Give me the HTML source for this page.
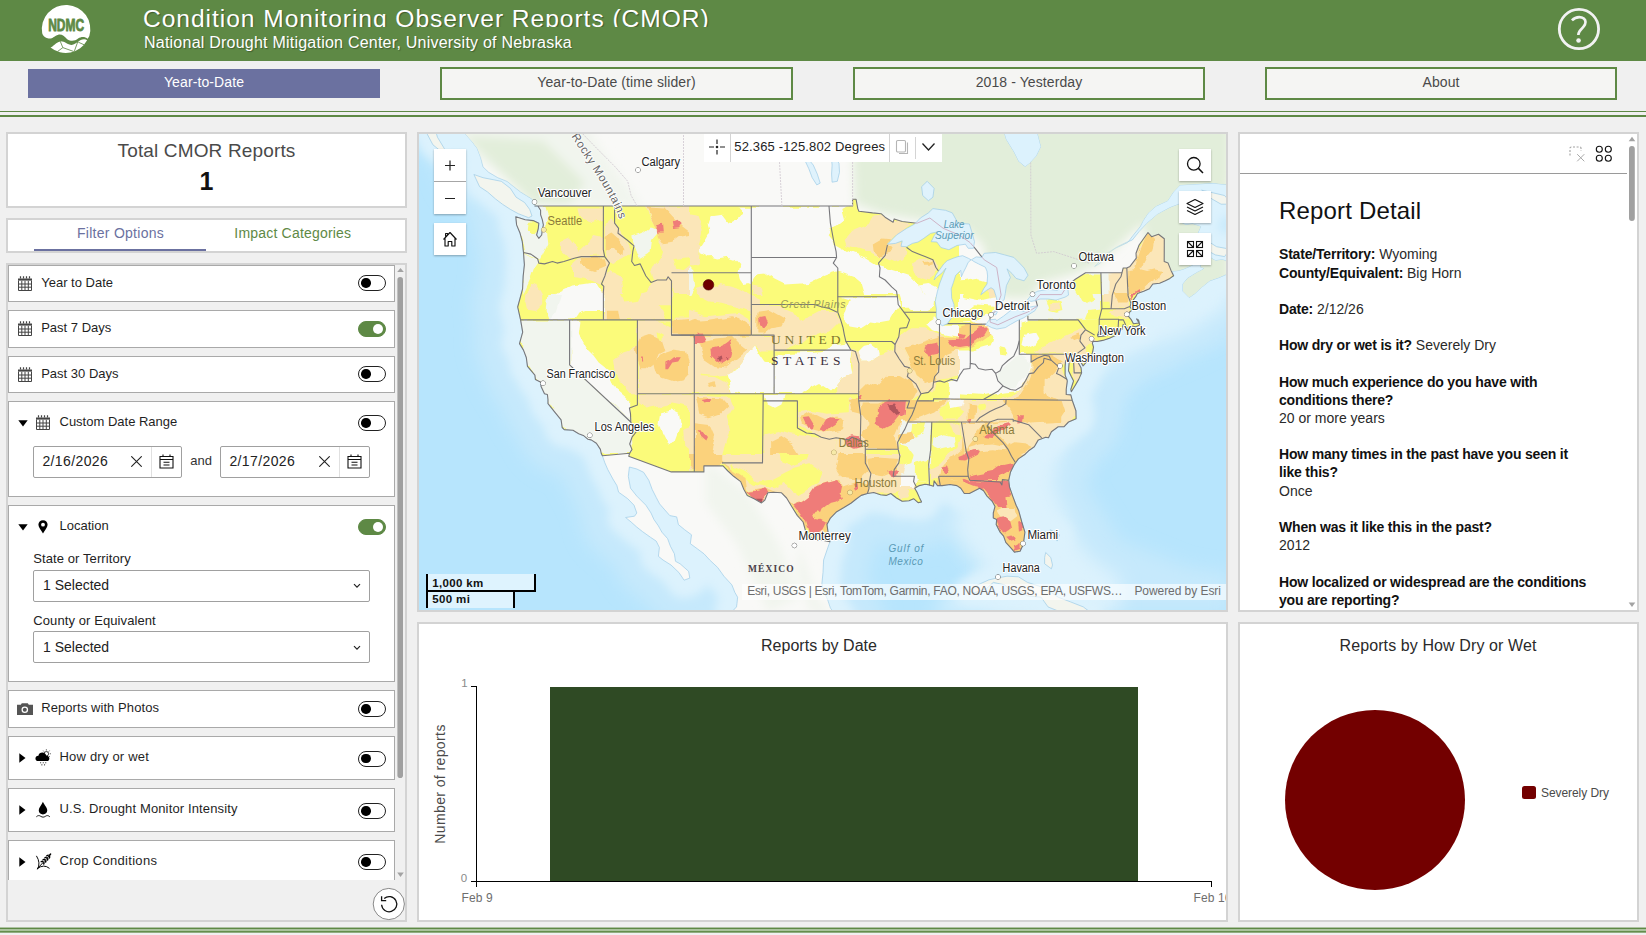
<!DOCTYPE html>
<html><head><meta charset="utf-8"><title>CMOR</title>
<style>
*{box-sizing:border-box;margin:0;padding:0}
html,body{width:1646px;height:935px;overflow:hidden;background:#f0f0f0;font-family:"Liberation Sans",sans-serif;color:#1a1a1a}
.abs{position:absolute}
.t{position:absolute;white-space:nowrap;line-height:1}
#hdr{position:absolute;left:0;top:0;width:1646px;height:61px;background:#5e8945}
.nav{position:absolute;height:33px;top:67px;border:2px solid #5e8945;background:#f5f5f3}
.panel{position:absolute;background:#fff;border:2px solid #d3d3d3}
.card{position:absolute;left:8px;width:387px;background:#fff;border:1px solid #a9a9a9}
.tog{position:absolute;left:358px;width:28px;height:16px;border-radius:8px;border:1px solid #222;background:#fff}
.tog i{position:absolute;left:2px;top:2.3px;width:9.5px;height:9.5px;border-radius:50%;background:#000}
.tog.on{background:#5e8945;border-color:#5e8945}
.tog.on i{left:auto;right:2px;top:2px;width:10px;height:10px;background:#fff}
.lbl{position:absolute;white-space:nowrap;font-size:13px;line-height:1;color:#1f1f1f}
.inp{position:absolute;height:32px;border:1px solid #a0a0a0;background:#fff;border-radius:2px}
.mbtn{position:absolute;width:32px;height:32px;background:#fff;box-shadow:0 1px 2px rgba(0,0,0,.3)}
</style></head><body>

<div id="hdr">
 <svg class="abs" style="left:30px;top:0px" width="80" height="60" viewBox="0 0 1247 935">
  <path d="M190 520 A378 378 0 1 1 925 560 L900 605 C860 570 800 565 750 600 C700 640 640 650 580 610 C530 560 500 530 440 540 C380 555 350 610 290 600 C230 590 200 560 190 520 Z" fill="#fff"/>
  <path d="M320 740 C370 720 400 660 470 645 C540 640 580 700 650 700 C700 695 740 650 790 625 C830 605 870 610 890 628 A378 378 0 0 1 320 740 Z" fill="#fff"/>
  <path d="M470 640 L512 742 L430 802 M512 742 L680 802 M745 650 L690 802 M752 657 L842 697" stroke="#5e8945" stroke-width="13" fill="none"/>
  <text x="283" y="480" font-family="Liberation Sans" font-weight="700" font-size="266" fill="#5e8945" stroke="#5e8945" stroke-width="13" textLength="560" lengthAdjust="spacingAndGlyphs">NDMC</text>
 </svg>
 <div class="abs" style="left:0;top:0;width:1400px;height:27px;overflow:hidden">
  <div class="t" style="left:143px;top:6.6px;font-size:24.6px;color:#fff;letter-spacing:.95px;text-shadow:1px 1px 1px rgba(0,0,0,.35)">Condition Monitoring Observer Reports (CMOR)</div>
 </div>
 <div class="t" style="left:144px;top:35.2px;font-size:16px;color:#fff;letter-spacing:.23px;text-shadow:1px 1px 1px rgba(0,0,0,.3)">National Drought Mitigation Center, University of Nebraska</div>
 <svg class="abs" style="left:1540px;top:0px" width="80" height="60" viewBox="0 0 1247 935">
  <circle cx="607" cy="452" r="306" fill="none" stroke="#f2f2f2" stroke-width="44"/>
  <path d="M498 318 C540 275 600 262 650 272 C700 285 725 330 700 385 C680 425 640 450 615 490 C603 510 598 525 598 545" fill="none" stroke="#f2f2f2" stroke-width="42"/>
  <circle cx="601" cy="632" r="36" fill="#f2f2f2"/>
 </svg>
</div>
<div class="abs" style="left:28px;top:69px;width:352px;height:29px;background:#6b71a0"></div>
<div class="t" style="left:28px;top:74.75px;font-size:14px;color:#fff;letter-spacing:0.1px;width:352px;text-align:center;">Year-to-Date</div>

<div class="nav" style="left:440px;width:353px"></div>
<div class="t" style="left:440px;top:74.75px;font-size:14px;color:#4a4a4a;letter-spacing:0.1px;width:353px;text-align:center;">Year-to-Date (time slider)</div>

<div class="nav" style="left:853px;width:352px"></div>
<div class="t" style="left:853px;top:74.75px;font-size:14px;color:#4a4a4a;letter-spacing:0.1px;width:352px;text-align:center;">2018 - Yesterday</div>

<div class="nav" style="left:1265px;width:352px"></div>
<div class="t" style="left:1265px;top:74.75px;font-size:14px;color:#4a4a4a;letter-spacing:0.1px;width:352px;text-align:center;">About</div>

<div class="abs" style="left:0;top:111px;width:1646px;height:1px;background:#5e8945"></div>
<div class="abs" style="left:0;top:115px;width:1646px;height:2px;background:#5e8945"></div>
<svg class="abs" style="left:0;top:926px" width="1646" height="9" viewBox="0 0 1646 9"><rect x="0" y="1.55" width="1646" height="1.9" fill="#5e8945"/><rect x="0" y="3.45" width="1646" height="1.6" fill="#a9c39c"/><rect x="0" y="5.05" width="1646" height="1.6" fill="#5e8945"/></svg>
<div class="panel" style="left:6px;top:132px;width:401px;height:76px"></div>
<div class="t" style="left:6px;top:140.82px;font-size:19px;color:#4a4a4a;letter-spacing:0.15px;width:401px;text-align:center;">Total CMOR Reports</div>
<div class="t" style="left:6px;top:168.54px;font-size:25px;color:#111;font-weight:700;width:401px;text-align:center;">1</div>
<div class="panel" style="left:6px;top:218px;width:401px;height:35px"></div>
<div class="t" style="left:77px;top:226.15px;font-size:14px;color:#6b71a0;letter-spacing:0.27px;">Filter Options</div>
<div class="t" style="left:234.3px;top:226.15px;font-size:14px;color:#5e8945;letter-spacing:0.2px;">Impact Categories</div>
<div class="abs" style="left:34px;top:248.5px;width:172px;height:2px;background:#6b71a0;"></div>
<div class="panel" style="left:6px;top:263px;width:401px;height:659px;background:#f0f0f0"></div>
<div class="abs" style="left:0;top:265px;width:407px;height:615px;overflow:hidden"><div class="abs" style="left:0;top:-265px;width:407px;height:935px">
<div class="card" style="top:265px;height:37px;"></div>
<svg class="abs" style="left:18px;top:276.2px" width="14" height="15" viewBox="0 0 14 15">
<path d="M0 2.5H14V4.6H0Z" fill="#444"/><path d="M2.5 0.3V2.5M5.5 0.3V2.5M8.5 0.3V2.5M11.5 0.3V2.5" stroke="#444" stroke-width="1.2"/>
<path d="M0.5 4.6V14.5H13.5V4.6M0.5 8H13.5M0.5 11.2H13.5M3.8 4.8V14.5M7 4.8V14.5M10.3 4.8V14.5" stroke="#444" stroke-width="1" fill="none"/></svg>
<div class="t" style="left:41.2px;top:275.80px;font-size:13px;color:#1f1f1f;">Year to Date</div>
<div class="tog" style="top:275px"><i></i></div>
<div class="card" style="top:310px;height:38px;"></div>
<svg class="abs" style="left:18px;top:321.2px" width="14" height="15" viewBox="0 0 14 15">
<path d="M0 2.5H14V4.6H0Z" fill="#444"/><path d="M2.5 0.3V2.5M5.5 0.3V2.5M8.5 0.3V2.5M11.5 0.3V2.5" stroke="#444" stroke-width="1.2"/>
<path d="M0.5 4.6V14.5H13.5V4.6M0.5 8H13.5M0.5 11.2H13.5M3.8 4.8V14.5M7 4.8V14.5M10.3 4.8V14.5" stroke="#444" stroke-width="1" fill="none"/></svg>
<div class="t" style="left:41.2px;top:320.80px;font-size:13px;color:#1f1f1f;">Past 7 Days</div>
<div class="tog on" style="top:321px"><i></i></div>
<div class="card" style="top:356px;height:37px;"></div>
<svg class="abs" style="left:18px;top:367.2px" width="14" height="15" viewBox="0 0 14 15">
<path d="M0 2.5H14V4.6H0Z" fill="#444"/><path d="M2.5 0.3V2.5M5.5 0.3V2.5M8.5 0.3V2.5M11.5 0.3V2.5" stroke="#444" stroke-width="1.2"/>
<path d="M0.5 4.6V14.5H13.5V4.6M0.5 8H13.5M0.5 11.2H13.5M3.8 4.8V14.5M7 4.8V14.5M10.3 4.8V14.5" stroke="#444" stroke-width="1" fill="none"/></svg>
<div class="t" style="left:41.2px;top:366.80px;font-size:13px;color:#1f1f1f;">Past 30 Days</div>
<div class="tog" style="top:366px"><i></i></div>
<div class="card" style="top:401px;height:96px;"></div>
<svg class="abs" style="left:17.5px;top:419.7px" width="10" height="7" viewBox="0 0 10 7"><path d="M0.3 0.3L9.7 0.3L5 6.5Z" fill="#000"/></svg>
<svg class="abs" style="left:36px;top:415px" width="14" height="15" viewBox="0 0 14 15">
<path d="M0 2.5H14V4.6H0Z" fill="#444"/><path d="M2.5 0.3V2.5M5.5 0.3V2.5M8.5 0.3V2.5M11.5 0.3V2.5" stroke="#444" stroke-width="1.2"/>
<path d="M0.5 4.6V14.5H13.5V4.6M0.5 8H13.5M0.5 11.2H13.5M3.8 4.8V14.5M7 4.8V14.5M10.3 4.8V14.5" stroke="#444" stroke-width="1" fill="none"/></svg>
<div class="t" style="left:59.5px;top:414.70px;font-size:13px;color:#1f1f1f;">Custom Date Range</div>
<div class="tog" style="top:415px"><i></i></div>
<div class="inp" style="left:33px;top:446px;width:149px"></div><div class="abs" style="left:151px;top:447px;width:1px;height:30px;background:#e0e0e0;"></div>
<div class="t" style="left:42.4px;top:453.85px;font-size:14px;color:#222;letter-spacing:0.39px;">2/16/2026</div>
<svg class="abs" style="left:130.5px;top:456.3px" width="11" height="11" viewBox="0 0 11 11"><path d="M0.3 0.3L10.7 10.7M10.7 0.3L0.3 10.7" stroke="#222" stroke-width="1.1"/></svg>
<svg class="abs" style="left:158.5px;top:454px" width="15" height="15" viewBox="0 0 15 15">
<path d="M1 2.5H14V14H1Z M1 5.5H14 M4 0.5V3 M11 0.5V3 M4.5 8.3H10.5 M4.5 11H10.5" stroke="#111" stroke-width="1.1" fill="none"/></svg>
<div class="t" style="left:190.2px;top:453.60px;font-size:13px;color:#333;">and</div>
<div class="inp" style="left:220px;top:446px;width:150px"></div><div class="abs" style="left:339px;top:447px;width:1px;height:30px;background:#e0e0e0;"></div>
<div class="t" style="left:229.4px;top:453.85px;font-size:14px;color:#222;letter-spacing:0.39px;">2/17/2026</div>
<svg class="abs" style="left:318.5px;top:456.3px" width="11" height="11" viewBox="0 0 11 11"><path d="M0.3 0.3L10.7 10.7M10.7 0.3L0.3 10.7" stroke="#222" stroke-width="1.1"/></svg>
<svg class="abs" style="left:346.5px;top:454px" width="15" height="15" viewBox="0 0 15 15">
<path d="M1 2.5H14V14H1Z M1 5.5H14 M4 0.5V3 M11 0.5V3 M4.5 8.3H10.5 M4.5 11H10.5" stroke="#111" stroke-width="1.1" fill="none"/></svg>
<div class="card" style="top:505px;height:177px;"></div>
<svg class="abs" style="left:17.5px;top:523.7px" width="10" height="7" viewBox="0 0 10 7"><path d="M0.3 0.3L9.7 0.3L5 6.5Z" fill="#000"/></svg>
<svg class="abs" style="left:38px;top:520px" width="10" height="14" viewBox="0 0 10 14"><path d="M5 0.3C2.3 0.3 0.4 2.3 0.4 4.8C0.4 7.6 3.4 10.3 5 13.6C6.6 10.3 9.6 7.6 9.6 4.8C9.6 2.3 7.7 0.3 5 0.3Z" fill="#000"/><circle cx="5" cy="4.7" r="1.9" fill="#fff"/></svg>
<div class="t" style="left:59.5px;top:519.00px;font-size:13px;color:#1f1f1f;">Location</div>
<div class="tog on" style="top:519px"><i></i></div>
<div class="t" style="left:33.3px;top:552.00px;font-size:13px;color:#222;letter-spacing:0.09px;">State or Territory</div>
<div class="inp" style="left:33px;top:570.3px;width:337px;height:31.7px"></div><div class="t" style="left:43px;top:578.05px;font-size:14px;color:#222;">1 Selected</div>
<svg class="abs" style="left:353px;top:583px" width="8" height="6" viewBox="0 0 8 6"><path d="M1 1.2L4 4.2L7 1.2" stroke="#222" stroke-width="1.2" fill="none"/></svg>
<div class="t" style="left:33.3px;top:613.80px;font-size:13px;color:#222;letter-spacing:0.09px;">County or Equivalent</div>
<div class="inp" style="left:33px;top:631.2px;width:337px;height:31.5px"></div><div class="t" style="left:43px;top:640.15px;font-size:14px;color:#222;">1 Selected</div>
<svg class="abs" style="left:353px;top:645px" width="8" height="6" viewBox="0 0 8 6"><path d="M1 1.2L4 4.2L7 1.2" stroke="#222" stroke-width="1.2" fill="none"/></svg>
<div class="card" style="top:690px;height:38px;"></div>
<div class="t" style="left:41.2px;top:701.00px;font-size:13px;color:#1f1f1f;letter-spacing:0.08px;">Reports with Photos</div>
<div class="tog" style="top:701px"><i></i></div>
<svg class="abs" style="left:17px;top:703px" width="16" height="12" viewBox="0 0 16 12"><path d="M0 1.8H3.8L4.8 0.2H10.8L11.8 1.8H16V12H0Z" fill="#555"/><circle cx="7.8" cy="6.8" r="3.3" fill="#fff"/><circle cx="7.8" cy="6.8" r="2" fill="#555"/></svg>
<div class="card" style="top:736px;height:44px;"></div>
<svg class="abs" style="left:19.3px;top:752.8px" width="7" height="10" viewBox="0 0 7 10"><path d="M0.3 0.3L6.5 5L0.3 9.7Z" fill="#000"/></svg>
<div class="t" style="left:59.5px;top:749.70px;font-size:13px;color:#1f1f1f;letter-spacing:0.2px;">How dry or wet</div>
<div class="tog" style="top:750.5px"><i></i></div>
<svg class="abs" style="left:35px;top:749px" width="17" height="18" viewBox="167 60.1 113.6 120.2"><circle cx="243" cy="92" r="15" fill="#fff" stroke="#000" stroke-width="5"/><path d="M243 62V70M264 71L259 77M273 92H266M266 112L261 108M222 71L227 77" stroke="#000" stroke-width="4.5"/><path d="M188 141C176 141 170 132 170 123C170 112 179 104 190 105C192 92 203 84 216 84C230 84 240 93 243 105C254 104 263 112 263 123C263 133 256 141 246 141Z" fill="#000"/><circle cx="205" cy="152" r="3.6"/><circle cx="222" cy="152" r="3.6"/><circle cx="239" cy="152" r="3.6"/><circle cx="213" cy="166" r="3.6"/><circle cx="231" cy="166" r="3.6"/></svg>
<div class="card" style="top:788px;height:44px;"></div>
<svg class="abs" style="left:19.3px;top:805px" width="7" height="10" viewBox="0 0 7 10"><path d="M0.3 0.3L6.5 5L0.3 9.7Z" fill="#000"/></svg>
<div class="t" style="left:59.5px;top:802.30px;font-size:13px;color:#1f1f1f;letter-spacing:0.13px;">U.S. Drought Monitor Intensity</div>
<div class="tog" style="top:802.8px"><i></i></div>
<svg class="abs" style="left:35px;top:800px" width="17" height="18" viewBox="167 400.8 113.6 120.2"><path d="M220 413C212 435 192 452 192 470C192 486 204 497 220 497C236 497 249 486 249 470C249 452 229 435 220 413Z" fill="#000"/><path d="M176 513C186 503 196 503 206 510C216 517 226 517 236 510C246 503 256 503 266 513" stroke="#000" stroke-width="6" fill="none"/></svg>
<div class="card" style="top:840px;height:44px;"></div>
<svg class="abs" style="left:19.3px;top:857px" width="7" height="10" viewBox="0 0 7 10"><path d="M0.3 0.3L6.5 5L0.3 9.7Z" fill="#000"/></svg>
<div class="t" style="left:59.5px;top:853.90px;font-size:13px;color:#1f1f1f;letter-spacing:0.3px;">Crop Conditions</div>
<div class="tog" style="top:854px"><i></i></div>
<svg class="abs" style="left:35px;top:853px" width="17" height="18" viewBox="167 754.8 113.6 120.2"><path d="M178 776Q207 822 184 862M184 858Q226 826 262 856M186 856L262 774" stroke="#000" stroke-width="6.5" fill="none" stroke-linecap="round"/><ellipse cx="226.3" cy="823.7" rx="10" ry="5.4" transform="rotate(-82 226.3 823.7)"/><ellipse cx="213.1" cy="811.4" rx="10" ry="5.4" transform="rotate(-12 213.1 811.4)"/><ellipse cx="238.9" cy="810.2" rx="10" ry="5.4" transform="rotate(-82 238.9 810.2)"/><ellipse cx="225.7" cy="797.9" rx="10" ry="5.4" transform="rotate(-12 225.7 797.9)"/><ellipse cx="251.5" cy="796.7" rx="10" ry="5.4" transform="rotate(-82 251.5 796.7)"/><ellipse cx="238.3" cy="784.4" rx="10" ry="5.4" transform="rotate(-12 238.3 784.4)"/><ellipse cx="264.1" cy="783.2" rx="10" ry="5.4" transform="rotate(-82 264.1 783.2)"/><ellipse cx="250.9" cy="770.9" rx="10" ry="5.4" transform="rotate(-12 250.9 770.9)"/><ellipse cx="268.0" cy="765.8" rx="10" ry="5.4" transform="rotate(-47 268.0 765.8)"/></svg>
</div></div>
<svg class="abs" style="left:396px;top:266px" width="9" height="614" viewBox="0 0 9 614"><path d="M1.2 6L4.5 2L7.8 6Z" fill="#a3a3a3"/><rect x="1.4" y="11" width="5.6" height="501" rx="2.8" fill="#a0a0a0"/><path d="M1.2 606.5L7.8 606.5L4.5 611Z" fill="#a3a3a3"/></svg>
<svg class="abs" style="left:372px;top:887px" width="34" height="34" viewBox="0 0 34 34"><circle cx="16.8" cy="17" r="15.6" fill="#fff" stroke="#8a8a8a" stroke-width="1"/><path d="M9.6 17.8A7.6 7.6 0 1 0 12.2 11.4" stroke="#111" stroke-width="1.3" fill="none"/><path d="M9.6 9.3V13.6H14.2" stroke="#111" stroke-width="1.3" fill="none"/></svg>
<div class="panel" style="left:417px;top:132px;width:811px;height:480px;background:#b7e5fd"></div>
<svg class="abs" style="left:419px;top:134px" width="807" height="476" viewBox="419 134 807 476">
<defs><clipPath id="usclip"><path d="M534.9 206.0L537.9 206.0L540.6 210.3L540.6 214.6L542.3 219.7L543.4 224.9L542.3 229.9L541.7 235.0L538.8 238.3L536.6 235.0L538.3 228.3L538.8 223.2L533.2 220.6L525.2 219.7L515.8 216.7L516.6 224.9L520.1 233.3L522.3 241.7L523.5 252.5L524.4 264.7L523.2 276.0L522.6 288.8L520.1 298.2L517.7 307.0L520.6 319.9L522.7 332.1L519.5 343.6L523.5 350.1L526.3 357.5L527.5 366.4L534.9 375.1L535.4 379.4L540.9 382.3L541.1 386.6L544.5 393.8L547.4 394.5L548.0 399.5L548.0 403.7L554.8 412.2L561.1 419.9L562.2 427.5L564.2 429.6L573.0 430.3L578.7 433.7L583.3 435.4L587.8 439.2L591.2 439.9L596.4 443.3L600.4 449.4L601.3 453.5L602.4 455.8L629.7 453.2L628.7 456.3L671.3 471.9L703.9 471.9L703.9 465.9L723.0 465.9L727.9 471.0L733.6 476.3L740.7 481.6L743.9 489.5L747.3 495.4L754.1 498.7L761.5 502.9L764.9 500.0L767.8 492.8L773.5 492.2L781.5 492.8L786.6 498.0L791.7 506.5L797.4 515.6L803.1 522.0L805.4 530.3L807.7 536.1L813.3 538.0L817.9 540.5L823.6 540.5L829.9 541.8L828.2 533.5L827.0 524.6L830.4 518.1L836.7 511.7L843.5 507.8L850.9 503.3L856.6 498.7L861.2 495.4L867.4 493.5L873.7 492.5L880.5 494.8L886.2 495.4L890.8 493.5L896.5 498.0L902.2 501.3L909.0 500.7L913.6 498.7L918.1 502.6L921.6 502.0L919.3 497.4L917.0 492.2L914.7 488.2L919.3 485.6L925.0 484.3L929.5 484.9L933.5 486.2L934.1 480.9L937.5 485.6L942.1 485.6L950.0 484.5L956.9 485.6L960.8 488.2L964.3 493.5L969.4 493.5L975.7 490.2L979.6 488.2L983.6 490.8L987.0 496.1L992.2 501.3L995.0 506.5L993.3 513.0L993.3 518.1L996.7 519.4L996.2 524.6L1000.1 532.2L1003.6 536.1L1005.8 542.4L1011.5 548.7L1014.4 552.1L1020.1 551.2L1023.3 544.3L1024.9 532.2L1021.8 522.0L1018.6 510.4L1016.1 505.2L1012.7 496.1L1009.5 486.9L1008.7 480.3L1010.4 472.3L1014.4 464.3L1018.4 458.9L1025.2 454.2L1028.6 450.8L1034.3 446.7L1038.3 439.9L1045.7 437.2L1048.5 437.8L1051.4 431.7L1058.2 426.8L1063.9 426.8L1068.5 422.0L1076.1 418.8L1075.9 410.8L1072.2 400.2L1070.8 394.9L1066.2 394.5L1066.2 389.5L1067.3 380.9L1065.1 375.1L1065.1 366.4L1065.6 360.5L1070.8 357.5L1069.1 363.4L1068.5 370.7L1071.3 376.5L1073.6 380.9L1070.8 389.5L1071.3 391.7L1075.3 385.2L1078.7 379.4L1081.6 372.9L1081.0 367.8L1077.0 360.5L1075.9 356.1L1079.9 360.5L1083.1 365.9L1089.0 359.0L1092.4 353.1L1093.5 347.1L1092.4 343.4L1093.0 341.2L1097.0 341.5L1102.7 340.4L1109.5 338.2L1117.5 334.4L1112.9 332.9L1104.9 335.9L1098.1 336.7L1097.5 335.1L1104.9 332.1L1112.9 330.9L1118.0 330.2L1122.0 329.4L1123.2 324.5L1125.4 327.6L1127.7 327.6L1131.7 326.0L1135.7 326.8L1139.7 325.0L1138.5 319.9L1136.6 318.9L1139.1 323.0L1133.4 323.8L1131.4 319.9L1127.7 315.3L1129.4 312.2L1132.3 309.9L1130.0 306.8L1131.1 302.9L1135.7 296.7L1137.4 293.5L1143.7 291.2L1149.4 288.8L1152.8 284.0L1159.6 283.2L1165.3 280.8L1169.9 278.4L1173.6 275.7L1171.0 270.4L1168.1 263.1L1164.2 261.5L1164.3 238.8L1158.5 234.2L1151.6 236.7L1148.0 232.5L1139.1 245.0L1136.0 253.3L1136.3 258.2L1130.0 266.4L1126.6 268.0L1123.2 268.0L1122.0 272.7L1085.6 272.8L1075.3 279.2L1067.3 285.6L1061.6 294.6L1040.0 294.6L1035.8 299.8L1037.5 306.0L1027.5 312.2L1014.9 316.9L997.9 324.8L990.2 322.2L989.9 315.3L995.6 311.5L997.6 304.5L1001.1 295.1L996.7 267.5L984.2 259.8L980.2 254.9L975.1 248.3L970.0 242.5L959.1 235.0L943.2 228.3L929.9 218.0L917.0 223.2L902.2 221.5L894.2 218.9L893.1 222.3L885.1 217.2L881.1 213.7L872.6 212.9L858.9 211.2L857.8 208.6L856.1 199.3L852.6 199.3L852.6 206.0L534.9 206.0Z"/></clipPath><filter id="bl" x="-5%" y="-5%" width="110%" height="110%"><feGaussianBlur stdDeviation="5"/></filter><filter id="bl3" x="-10%" y="-10%" width="120%" height="120%"><feGaussianBlur stdDeviation="9"/></filter><clipPath id="landclip"><path d="M452.3 104.6L453.4 114.4L460.3 124.0L464.8 133.5L471.6 141.0L477.3 148.5L480.8 157.8L483.0 166.9L488.7 172.3L497.8 177.7L507.0 181.3L513.8 186.7L520.6 192.0L526.3 195.5L532.0 199.0L533.7 201.6L534.9 206.0L537.9 206.0L540.6 210.3L540.6 214.6L542.3 219.7L543.4 224.9L542.3 229.9L541.7 235.0L538.8 238.3L536.6 235.0L538.3 228.3L538.8 223.2L533.2 220.6L525.2 219.7L515.8 216.7L516.6 224.9L520.1 233.3L522.3 241.7L523.5 252.5L524.4 264.7L523.2 276.0L522.6 288.8L520.1 298.2L517.7 307.0L520.6 319.9L522.7 332.1L519.5 343.6L523.5 350.1L526.3 357.5L527.5 366.4L534.9 375.1L535.4 379.4L540.9 382.3L541.1 386.6L544.5 393.8L547.4 394.5L548.0 399.5L548.0 403.7L554.8 412.2L561.1 419.9L562.2 427.5L564.2 429.6L573.0 430.3L578.7 433.7L583.3 435.4L587.8 439.2L591.2 439.9L596.4 443.3L600.4 449.4L601.3 453.5L602.4 455.8L604.9 462.9L607.8 469.6L612.9 479.0L616.9 485.6L618.6 492.2L627.7 498.7L634.0 505.2L636.8 513.0L634.5 516.2L625.6 517.5L631.1 522.0L636.8 527.1L642.5 531.6L650.5 537.3L656.2 541.1L659.4 547.5L658.4 556.3L663.0 560.0L671.0 565.0L678.9 572.5L684.1 580.2L689.8 578.1L688.6 571.3L680.1 563.8L675.5 561.3L674.4 553.8L670.4 546.2L667.6 538.6L661.9 532.2L658.4 525.9L653.9 519.4L651.0 513.0L645.9 505.2L636.8 496.1L630.5 488.2L628.3 476.3L629.4 467.0L636.8 469.0L643.6 472.3L648.8 480.3L652.2 489.5L656.2 497.4L659.6 503.9L664.1 509.1L669.8 515.6L676.7 516.9L678.4 524.6L684.6 529.7L691.5 534.8L690.3 543.7L697.2 548.7L704.0 553.8L709.7 560.0L717.7 567.5L723.9 576.2L731.9 584.9L734.8 592.3L737.6 597.2L737.0 603.3L736.5 606.9L733.0 610.6L740.5 621.5L839.5 621.5L836.1 615.4L830.4 608.1L827.6 599.6L823.6 591.0L821.9 583.6L823.0 572.5L823.6 560.0L827.0 550.0L829.9 541.8L828.2 533.5L827.0 524.6L830.4 518.1L836.7 511.7L843.5 507.8L850.9 503.3L856.6 498.7L861.2 495.4L867.4 493.5L873.7 492.5L880.5 494.8L886.2 495.4L890.8 493.5L896.5 498.0L902.2 501.3L909.0 500.7L913.6 498.7L918.1 502.6L921.6 502.0L919.3 497.4L917.0 492.2L914.7 488.2L919.3 485.6L925.0 484.3L929.5 484.9L933.5 486.2L934.1 480.9L937.5 485.6L942.1 485.6L950.0 484.5L956.9 485.6L960.8 488.2L964.3 493.5L969.4 493.5L975.7 490.2L979.6 488.2L983.6 490.8L987.0 496.1L992.2 501.3L995.0 506.5L993.3 513.0L993.3 518.1L996.7 519.4L996.2 524.6L1000.1 532.2L1003.6 536.1L1005.8 542.4L1011.5 548.7L1014.4 552.1L1020.1 551.2L1023.3 544.3L1024.9 532.2L1021.8 522.0L1018.6 510.4L1016.1 505.2L1012.7 496.1L1009.5 486.9L1008.7 480.3L1010.4 472.3L1014.4 464.3L1018.4 458.9L1025.2 454.2L1028.6 450.8L1034.3 446.7L1038.3 439.9L1045.7 437.2L1048.5 437.8L1051.4 431.7L1058.2 426.8L1063.9 426.8L1068.5 422.0L1076.1 418.8L1075.9 410.8L1072.2 400.2L1070.8 394.9L1066.2 394.5L1066.2 389.5L1067.3 380.9L1065.1 375.1L1065.1 366.4L1065.6 360.5L1070.8 357.5L1069.1 363.4L1068.5 370.7L1071.3 376.5L1073.6 380.9L1070.8 389.5L1071.3 391.7L1075.3 385.2L1078.7 379.4L1081.6 372.9L1081.0 367.8L1077.0 360.5L1075.9 356.1L1079.9 360.5L1083.1 365.9L1089.0 359.0L1092.4 353.1L1093.5 347.1L1092.4 343.4L1093.0 341.2L1097.0 341.5L1102.7 340.4L1109.5 338.2L1117.5 334.4L1112.9 332.9L1104.9 335.9L1098.1 336.7L1097.5 335.1L1104.9 332.1L1112.9 330.9L1118.0 330.2L1122.0 329.4L1123.2 324.5L1125.4 327.6L1127.7 327.6L1131.7 326.0L1135.7 326.8L1139.7 325.0L1138.5 319.9L1136.6 318.9L1139.1 323.0L1133.4 323.8L1131.4 319.9L1127.7 315.3L1129.4 312.2L1132.3 309.9L1130.0 306.8L1131.1 302.9L1135.7 296.7L1137.4 293.5L1143.7 291.2L1149.4 288.8L1152.8 284.0L1159.6 283.2L1165.3 280.8L1169.9 278.4L1173.6 275.7L1172.1 271.2L1179.0 270.4L1184.1 268.8L1191.5 265.5L1197.2 262.3L1201.7 259.0L1201.2 262.3L1200.6 267.2L1204.0 268.0L1202.9 269.6L1196.6 272.8L1187.5 278.4L1183.0 284.0L1183.0 291.2L1189.2 297.5L1194.9 293.5L1201.7 287.2L1209.7 280.8L1218.8 277.6L1230.2 272.8L1241.6 268.0L1248.4 263.1L1254.1 256.6L1248.4 246.7L1247.3 240.0L1240.5 248.3L1235.3 256.6L1231.4 262.3L1222.2 259.8L1215.4 260.7L1208.6 256.6L1201.7 252.5L1197.8 243.4L1196.1 236.7L1200.6 226.6L1192.6 224.0L1185.8 224.9L1180.1 222.3L1192.6 221.5L1204.0 214.6L1204.6 208.6L1196.1 202.5L1181.2 203.4L1169.9 207.7L1157.3 214.6L1147.1 223.2L1139.1 231.6L1132.3 240.0L1126.0 242.5L1117.5 246.7L1109.5 251.6L1102.7 255.7L1098.1 263.1L1094.7 266.4L1100.4 263.1L1106.1 254.9L1115.2 248.3L1127.7 242.5L1133.4 235.0L1140.2 226.6L1143.1 220.6L1148.2 212.9L1156.2 206.0L1167.6 200.7L1173.3 192.0L1180.1 184.9L1196.1 184.0L1213.1 183.1L1230.2 184.9L1253.0 184.9L1253.0 94.7L1059.4 94.7L1030.9 104.6L1036.6 118.2L1037.7 133.5L1041.1 146.7L1036.6 155.9L1029.8 163.3L1025.2 166.9L1018.4 161.4L1013.8 152.2L1005.8 139.2L1001.3 124.0L999.0 104.6L999.0 94.7L455.7 94.7Z"/></clipPath><filter id="bl2" x="400" y="120" width="850" height="510" filterUnits="userSpaceOnUse" primitiveUnits="userSpaceOnUse"><feTurbulence type="fractalNoise" baseFrequency="0.07" numOctaves="2" seed="7" result="n"/><feDisplacementMap in="SourceGraphic" in2="n" scale="7" xChannelSelector="R" yChannelSelector="G"/></filter></defs>
<rect x="419" y="134" width="807" height="476" fill="#b7e5fd"/>
<g filter="url(#bl3)"><path d="M452.3 104.6L453.4 114.4L460.3 124.0L464.8 133.5L471.6 141.0L477.3 148.5L480.8 157.8L483.0 166.9L488.7 172.3L497.8 177.7L507.0 181.3L513.8 186.7L520.6 192.0L526.3 195.5L532.0 199.0L533.7 201.6L534.9 206.0L537.9 206.0L540.6 210.3L540.6 214.6L542.3 219.7L543.4 224.9L542.3 229.9L541.7 235.0L538.8 238.3L536.6 235.0L538.3 228.3L538.8 223.2L533.2 220.6L525.2 219.7L515.8 216.7L516.6 224.9L520.1 233.3L522.3 241.7L523.5 252.5L524.4 264.7L523.2 276.0L522.6 288.8L520.1 298.2L517.7 307.0L520.6 319.9L522.7 332.1L519.5 343.6L523.5 350.1L526.3 357.5L527.5 366.4L534.9 375.1L535.4 379.4L540.9 382.3L541.1 386.6L544.5 393.8L547.4 394.5L548.0 399.5L548.0 403.7L554.8 412.2L561.1 419.9L562.2 427.5L564.2 429.6L573.0 430.3L578.7 433.7L583.3 435.4L587.8 439.2L591.2 439.9L596.4 443.3L600.4 449.4L601.3 453.5L602.4 455.8L604.9 462.9L607.8 469.6L612.9 479.0L616.9 485.6L618.6 492.2L627.7 498.7L634.0 505.2L636.8 513.0L634.5 516.2L625.6 517.5L631.1 522.0L636.8 527.1L642.5 531.6L650.5 537.3L656.2 541.1L659.4 547.5L658.4 556.3L663.0 560.0L671.0 565.0L678.9 572.5L684.1 580.2L689.8 578.1L688.6 571.3L680.1 563.8L675.5 561.3L674.4 553.8L670.4 546.2L667.6 538.6L661.9 532.2L658.4 525.9L653.9 519.4L651.0 513.0L645.9 505.2L636.8 496.1L630.5 488.2L628.3 476.3L629.4 467.0L636.8 469.0L643.6 472.3L648.8 480.3L652.2 489.5L656.2 497.4L659.6 503.9L664.1 509.1L669.8 515.6L676.7 516.9L678.4 524.6L684.6 529.7L691.5 534.8L690.3 543.7L697.2 548.7L704.0 553.8L709.7 560.0L717.7 567.5L723.9 576.2L731.9 584.9L734.8 592.3L737.6 597.2L737.0 603.3L736.5 606.9L733.0 610.6L740.5 621.5L839.5 621.5L836.1 615.4L830.4 608.1L827.6 599.6L823.6 591.0L821.9 583.6L823.0 572.5L823.6 560.0L827.0 550.0L829.9 541.8L828.2 533.5L827.0 524.6L830.4 518.1L836.7 511.7L843.5 507.8L850.9 503.3L856.6 498.7L861.2 495.4L867.4 493.5L873.7 492.5L880.5 494.8L886.2 495.4L890.8 493.5L896.5 498.0L902.2 501.3L909.0 500.7L913.6 498.7L918.1 502.6L921.6 502.0L919.3 497.4L917.0 492.2L914.7 488.2L919.3 485.6L925.0 484.3L929.5 484.9L933.5 486.2L934.1 480.9L937.5 485.6L942.1 485.6L950.0 484.5L956.9 485.6L960.8 488.2L964.3 493.5L969.4 493.5L975.7 490.2L979.6 488.2L983.6 490.8L987.0 496.1L992.2 501.3L995.0 506.5L993.3 513.0L993.3 518.1L996.7 519.4L996.2 524.6L1000.1 532.2L1003.6 536.1L1005.8 542.4L1011.5 548.7L1014.4 552.1L1020.1 551.2L1023.3 544.3L1024.9 532.2L1021.8 522.0L1018.6 510.4L1016.1 505.2L1012.7 496.1L1009.5 486.9L1008.7 480.3L1010.4 472.3L1014.4 464.3L1018.4 458.9L1025.2 454.2L1028.6 450.8L1034.3 446.7L1038.3 439.9L1045.7 437.2L1048.5 437.8L1051.4 431.7L1058.2 426.8L1063.9 426.8L1068.5 422.0L1076.1 418.8L1075.9 410.8L1072.2 400.2L1070.8 394.9L1066.2 394.5L1066.2 389.5L1067.3 380.9L1065.1 375.1L1065.1 366.4L1065.6 360.5L1070.8 357.5L1069.1 363.4L1068.5 370.7L1071.3 376.5L1073.6 380.9L1070.8 389.5L1071.3 391.7L1075.3 385.2L1078.7 379.4L1081.6 372.9L1081.0 367.8L1077.0 360.5L1075.9 356.1L1079.9 360.5L1083.1 365.9L1089.0 359.0L1092.4 353.1L1093.5 347.1L1092.4 343.4L1093.0 341.2L1097.0 341.5L1102.7 340.4L1109.5 338.2L1117.5 334.4L1112.9 332.9L1104.9 335.9L1098.1 336.7L1097.5 335.1L1104.9 332.1L1112.9 330.9L1118.0 330.2L1122.0 329.4L1123.2 324.5L1125.4 327.6L1127.7 327.6L1131.7 326.0L1135.7 326.8L1139.7 325.0L1138.5 319.9L1136.6 318.9L1139.1 323.0L1133.4 323.8L1131.4 319.9L1127.7 315.3L1129.4 312.2L1132.3 309.9L1130.0 306.8L1131.1 302.9L1135.7 296.7L1137.4 293.5L1143.7 291.2L1149.4 288.8L1152.8 284.0L1159.6 283.2L1165.3 280.8L1169.9 278.4L1173.6 275.7L1172.1 271.2L1179.0 270.4L1184.1 268.8L1191.5 265.5L1197.2 262.3L1201.7 259.0L1201.2 262.3L1200.6 267.2L1204.0 268.0L1202.9 269.6L1196.6 272.8L1187.5 278.4L1183.0 284.0L1183.0 291.2L1189.2 297.5L1194.9 293.5L1201.7 287.2L1209.7 280.8L1218.8 277.6L1230.2 272.8L1241.6 268.0L1248.4 263.1L1254.1 256.6L1248.4 246.7L1247.3 240.0L1240.5 248.3L1235.3 256.6L1231.4 262.3L1222.2 259.8L1215.4 260.7L1208.6 256.6L1201.7 252.5L1197.8 243.4L1196.1 236.7L1200.6 226.6L1192.6 224.0L1185.8 224.9L1180.1 222.3L1192.6 221.5L1204.0 214.6L1204.6 208.6L1196.1 202.5L1181.2 203.4L1169.9 207.7L1157.3 214.6L1147.1 223.2L1139.1 231.6L1132.3 240.0L1126.0 242.5L1117.5 246.7L1109.5 251.6L1102.7 255.7L1098.1 263.1L1094.7 266.4L1100.4 263.1L1106.1 254.9L1115.2 248.3L1127.7 242.5L1133.4 235.0L1140.2 226.6L1143.1 220.6L1148.2 212.9L1156.2 206.0L1167.6 200.7L1173.3 192.0L1180.1 184.9L1196.1 184.0L1213.1 183.1L1230.2 184.9L1253.0 184.9L1253.0 94.7L1059.4 94.7L1030.9 104.6L1036.6 118.2L1037.7 133.5L1041.1 146.7L1036.6 155.9L1029.8 163.3L1025.2 166.9L1018.4 161.4L1013.8 152.2L1005.8 139.2L1001.3 124.0L999.0 104.6L999.0 94.7L455.7 94.7Z" fill="#c6e9fc" stroke="#c6e9fc" stroke-width="90" stroke-linejoin="round"/></g><path d="M1230.0 233.3L1230.0 340.0L1187.0 360.0L1146.9 376.7L1120.2 400.1L1106.9 426.8L1093.6 450.1L1086.9 486.8L1103.6 513.5L1120.2 540.2L1153.6 553.5L1187.0 566.9L1230.0 573.6L1230.0 611.9L986.8 611.9L986.8 233.3Z" fill="#c6e9fc" filter="url(#bl3)"/><path d="M1230.0 233.3L1230.0 306.7L1187.0 333.4L1140.3 350.0L1106.9 366.7L1086.9 386.7L1083.5 410.1L1073.5 433.4L1060.2 456.8L1053.5 486.8L1066.9 513.5L1073.5 533.5L1086.9 553.5L1103.6 566.9L1120.2 576.9L1120.2 611.9L986.8 611.9L986.8 500.2L1053.5 400.1L1086.9 350.0L1120.2 233.3Z" fill="#dcf2fd" filter="url(#bl3)"/><path d="M820.0 500.2L840.0 513.5L863.4 503.5L893.4 500.2L920.1 503.5L953.4 490.2L963.4 500.2L953.4 526.8L966.8 546.9L986.8 563.5L1006.8 566.9L1026.8 553.5L1006.8 533.5L996.8 513.5L993.5 486.8L920.1 480.1L820.0 486.8Z" fill="#dcf2fd" filter="url(#bl3)"/><path d="M930.1 611.9L953.4 593.6L986.8 583.6L1020.2 580.2L1053.5 583.6L1086.9 611.9Z" fill="#dcf2fd" filter="url(#bl3)"/><path d="M813.3 500.2L833.3 516.8L826.7 540.2L816.7 566.9L820.0 611.9L800.0 611.9L800.0 500.2Z" fill="#dcf2fd" filter="url(#bl3)"/><g filter="url(#bl)"><path d="M452.3 104.6L453.4 114.4L460.3 124.0L464.8 133.5L471.6 141.0L477.3 148.5L480.8 157.8L483.0 166.9L488.7 172.3L497.8 177.7L507.0 181.3L513.8 186.7L520.6 192.0L526.3 195.5L532.0 199.0L533.7 201.6L534.9 206.0L537.9 206.0L540.6 210.3L540.6 214.6L542.3 219.7L543.4 224.9L542.3 229.9L541.7 235.0L538.8 238.3L536.6 235.0L538.3 228.3L538.8 223.2L533.2 220.6L525.2 219.7L515.8 216.7L516.6 224.9L520.1 233.3L522.3 241.7L523.5 252.5L524.4 264.7L523.2 276.0L522.6 288.8L520.1 298.2L517.7 307.0L520.6 319.9L522.7 332.1L519.5 343.6L523.5 350.1L526.3 357.5L527.5 366.4L534.9 375.1L535.4 379.4L540.9 382.3L541.1 386.6L544.5 393.8L547.4 394.5L548.0 399.5L548.0 403.7L554.8 412.2L561.1 419.9L562.2 427.5L564.2 429.6L573.0 430.3L578.7 433.7L583.3 435.4L587.8 439.2L591.2 439.9L596.4 443.3L600.4 449.4L601.3 453.5L602.4 455.8L604.9 462.9L607.8 469.6L612.9 479.0L616.9 485.6L618.6 492.2L627.7 498.7L634.0 505.2L636.8 513.0L634.5 516.2L625.6 517.5L631.1 522.0L636.8 527.1L642.5 531.6L650.5 537.3L656.2 541.1L659.4 547.5L658.4 556.3L663.0 560.0L671.0 565.0L678.9 572.5L684.1 580.2L689.8 578.1L688.6 571.3L680.1 563.8L675.5 561.3L674.4 553.8L670.4 546.2L667.6 538.6L661.9 532.2L658.4 525.9L653.9 519.4L651.0 513.0L645.9 505.2L636.8 496.1L630.5 488.2L628.3 476.3L629.4 467.0L636.8 469.0L643.6 472.3L648.8 480.3L652.2 489.5L656.2 497.4L659.6 503.9L664.1 509.1L669.8 515.6L676.7 516.9L678.4 524.6L684.6 529.7L691.5 534.8L690.3 543.7L697.2 548.7L704.0 553.8L709.7 560.0L717.7 567.5L723.9 576.2L731.9 584.9L734.8 592.3L737.6 597.2L737.0 603.3L736.5 606.9L733.0 610.6L740.5 621.5L839.5 621.5L836.1 615.4L830.4 608.1L827.6 599.6L823.6 591.0L821.9 583.6L823.0 572.5L823.6 560.0L827.0 550.0L829.9 541.8L828.2 533.5L827.0 524.6L830.4 518.1L836.7 511.7L843.5 507.8L850.9 503.3L856.6 498.7L861.2 495.4L867.4 493.5L873.7 492.5L880.5 494.8L886.2 495.4L890.8 493.5L896.5 498.0L902.2 501.3L909.0 500.7L913.6 498.7L918.1 502.6L921.6 502.0L919.3 497.4L917.0 492.2L914.7 488.2L919.3 485.6L925.0 484.3L929.5 484.9L933.5 486.2L934.1 480.9L937.5 485.6L942.1 485.6L950.0 484.5L956.9 485.6L960.8 488.2L964.3 493.5L969.4 493.5L975.7 490.2L979.6 488.2L983.6 490.8L987.0 496.1L992.2 501.3L995.0 506.5L993.3 513.0L993.3 518.1L996.7 519.4L996.2 524.6L1000.1 532.2L1003.6 536.1L1005.8 542.4L1011.5 548.7L1014.4 552.1L1020.1 551.2L1023.3 544.3L1024.9 532.2L1021.8 522.0L1018.6 510.4L1016.1 505.2L1012.7 496.1L1009.5 486.9L1008.7 480.3L1010.4 472.3L1014.4 464.3L1018.4 458.9L1025.2 454.2L1028.6 450.8L1034.3 446.7L1038.3 439.9L1045.7 437.2L1048.5 437.8L1051.4 431.7L1058.2 426.8L1063.9 426.8L1068.5 422.0L1076.1 418.8L1075.9 410.8L1072.2 400.2L1070.8 394.9L1066.2 394.5L1066.2 389.5L1067.3 380.9L1065.1 375.1L1065.1 366.4L1065.6 360.5L1070.8 357.5L1069.1 363.4L1068.5 370.7L1071.3 376.5L1073.6 380.9L1070.8 389.5L1071.3 391.7L1075.3 385.2L1078.7 379.4L1081.6 372.9L1081.0 367.8L1077.0 360.5L1075.9 356.1L1079.9 360.5L1083.1 365.9L1089.0 359.0L1092.4 353.1L1093.5 347.1L1092.4 343.4L1093.0 341.2L1097.0 341.5L1102.7 340.4L1109.5 338.2L1117.5 334.4L1112.9 332.9L1104.9 335.9L1098.1 336.7L1097.5 335.1L1104.9 332.1L1112.9 330.9L1118.0 330.2L1122.0 329.4L1123.2 324.5L1125.4 327.6L1127.7 327.6L1131.7 326.0L1135.7 326.8L1139.7 325.0L1138.5 319.9L1136.6 318.9L1139.1 323.0L1133.4 323.8L1131.4 319.9L1127.7 315.3L1129.4 312.2L1132.3 309.9L1130.0 306.8L1131.1 302.9L1135.7 296.7L1137.4 293.5L1143.7 291.2L1149.4 288.8L1152.8 284.0L1159.6 283.2L1165.3 280.8L1169.9 278.4L1173.6 275.7L1172.1 271.2L1179.0 270.4L1184.1 268.8L1191.5 265.5L1197.2 262.3L1201.7 259.0L1201.2 262.3L1200.6 267.2L1204.0 268.0L1202.9 269.6L1196.6 272.8L1187.5 278.4L1183.0 284.0L1183.0 291.2L1189.2 297.5L1194.9 293.5L1201.7 287.2L1209.7 280.8L1218.8 277.6L1230.2 272.8L1241.6 268.0L1248.4 263.1L1254.1 256.6L1248.4 246.7L1247.3 240.0L1240.5 248.3L1235.3 256.6L1231.4 262.3L1222.2 259.8L1215.4 260.7L1208.6 256.6L1201.7 252.5L1197.8 243.4L1196.1 236.7L1200.6 226.6L1192.6 224.0L1185.8 224.9L1180.1 222.3L1192.6 221.5L1204.0 214.6L1204.6 208.6L1196.1 202.5L1181.2 203.4L1169.9 207.7L1157.3 214.6L1147.1 223.2L1139.1 231.6L1132.3 240.0L1126.0 242.5L1117.5 246.7L1109.5 251.6L1102.7 255.7L1098.1 263.1L1094.7 266.4L1100.4 263.1L1106.1 254.9L1115.2 248.3L1127.7 242.5L1133.4 235.0L1140.2 226.6L1143.1 220.6L1148.2 212.9L1156.2 206.0L1167.6 200.7L1173.3 192.0L1180.1 184.9L1196.1 184.0L1213.1 183.1L1230.2 184.9L1253.0 184.9L1253.0 94.7L1059.4 94.7L1030.9 104.6L1036.6 118.2L1037.7 133.5L1041.1 146.7L1036.6 155.9L1029.8 163.3L1025.2 166.9L1018.4 161.4L1013.8 152.2L1005.8 139.2L1001.3 124.0L999.0 104.6L999.0 94.7L455.7 94.7Z" fill="#dcf2fd" stroke="#dcf2fd" stroke-width="36" stroke-linejoin="round"/><path d="M473.9 174.5L483.0 177.7L501.3 181.3L510.4 188.4L516.1 197.2L524.6 202.5L529.7 209.4L532.0 216.0L528.6 217.7L518.3 213.7L510.4 209.4L502.4 204.2L495.6 199.0L487.6 192.0L479.6 186.7Z" fill="#dcf2fd" stroke="#dcf2fd" stroke-width="26" stroke-linejoin="round"/><path d="M421.5 110.5L436.3 114.4L434.1 125.9L437.5 137.3L444.3 148.5L443.2 153.1L432.9 144.8L424.9 129.7L420.4 120.2Z" fill="#dcf2fd" stroke="#dcf2fd" stroke-width="26" stroke-linejoin="round"/><path d="M1207.4 240.9L1216.6 246.7L1230.2 249.2L1224.5 256.6L1215.4 254.9L1206.3 250.0L1202.9 246.7Z" fill="#dcf2fd" stroke="#dcf2fd" stroke-width="26" stroke-linejoin="round"/><path d="M1201.7 190.2L1224.5 195.5L1232.5 204.2L1221.1 204.2L1212.0 199.0Z" fill="#dcf2fd" stroke="#dcf2fd" stroke-width="26" stroke-linejoin="round"/><path d="M1261.0 229.9L1261.0 214.6L1275.8 197.2L1287.2 170.5L1300.8 159.6L1310.0 159.6L1310.0 229.9Z" fill="#dcf2fd" stroke="#dcf2fd" stroke-width="26" stroke-linejoin="round"/><path d="M968.8 591.0L975.1 586.1L988.8 579.9L996.7 578.1L1007.0 576.2L1018.4 576.8L1027.5 582.4L1038.9 586.1L1049.1 591.0L1058.2 597.2L1070.8 602.0L1083.3 606.9L1091.3 613.0L1090.1 615.4L1076.5 616.6L1053.7 616.6L1057.1 610.6L1048.0 606.9L1041.1 597.2L1027.5 595.9L1019.5 590.4L1010.4 590.4L1004.7 584.9L993.3 582.4L986.5 588.6L973.9 592.9Z" fill="#dcf2fd" stroke="#dcf2fd" stroke-width="26" stroke-linejoin="round"/><path d="M1045.7 552.5L1050.8 557.5L1052.5 565.0L1051.4 568.8L1044.6 563.8L1044.6 557.5Z" fill="#dcf2fd" stroke="#dcf2fd" stroke-width="26" stroke-linejoin="round"/><path d="M1036.6 532.2L1048.0 531.6L1049.1 533.5L1041.1 534.8Z" fill="#dcf2fd" stroke="#dcf2fd" stroke-width="26" stroke-linejoin="round"/><path d="M1050.3 529.7L1059.4 534.8L1057.1 541.1L1056.0 537.3Z" fill="#dcf2fd" stroke="#dcf2fd" stroke-width="26" stroke-linejoin="round"/></g>
<path d="M452.3 104.6L453.4 114.4L460.3 124.0L464.8 133.5L471.6 141.0L477.3 148.5L480.8 157.8L483.0 166.9L488.7 172.3L497.8 177.7L507.0 181.3L513.8 186.7L520.6 192.0L526.3 195.5L532.0 199.0L533.7 201.6L534.9 206.0L537.9 206.0L540.6 210.3L540.6 214.6L542.3 219.7L543.4 224.9L542.3 229.9L541.7 235.0L538.8 238.3L536.6 235.0L538.3 228.3L538.8 223.2L533.2 220.6L525.2 219.7L515.8 216.7L516.6 224.9L520.1 233.3L522.3 241.7L523.5 252.5L524.4 264.7L523.2 276.0L522.6 288.8L520.1 298.2L517.7 307.0L520.6 319.9L522.7 332.1L519.5 343.6L523.5 350.1L526.3 357.5L527.5 366.4L534.9 375.1L535.4 379.4L540.9 382.3L541.1 386.6L544.5 393.8L547.4 394.5L548.0 399.5L548.0 403.7L554.8 412.2L561.1 419.9L562.2 427.5L564.2 429.6L573.0 430.3L578.7 433.7L583.3 435.4L587.8 439.2L591.2 439.9L596.4 443.3L600.4 449.4L601.3 453.5L602.4 455.8L604.9 462.9L607.8 469.6L612.9 479.0L616.9 485.6L618.6 492.2L627.7 498.7L634.0 505.2L636.8 513.0L634.5 516.2L625.6 517.5L631.1 522.0L636.8 527.1L642.5 531.6L650.5 537.3L656.2 541.1L659.4 547.5L658.4 556.3L663.0 560.0L671.0 565.0L678.9 572.5L684.1 580.2L689.8 578.1L688.6 571.3L680.1 563.8L675.5 561.3L674.4 553.8L670.4 546.2L667.6 538.6L661.9 532.2L658.4 525.9L653.9 519.4L651.0 513.0L645.9 505.2L636.8 496.1L630.5 488.2L628.3 476.3L629.4 467.0L636.8 469.0L643.6 472.3L648.8 480.3L652.2 489.5L656.2 497.4L659.6 503.9L664.1 509.1L669.8 515.6L676.7 516.9L678.4 524.6L684.6 529.7L691.5 534.8L690.3 543.7L697.2 548.7L704.0 553.8L709.7 560.0L717.7 567.5L723.9 576.2L731.9 584.9L734.8 592.3L737.6 597.2L737.0 603.3L736.5 606.9L733.0 610.6L740.5 621.5L839.5 621.5L836.1 615.4L830.4 608.1L827.6 599.6L823.6 591.0L821.9 583.6L823.0 572.5L823.6 560.0L827.0 550.0L829.9 541.8L828.2 533.5L827.0 524.6L830.4 518.1L836.7 511.7L843.5 507.8L850.9 503.3L856.6 498.7L861.2 495.4L867.4 493.5L873.7 492.5L880.5 494.8L886.2 495.4L890.8 493.5L896.5 498.0L902.2 501.3L909.0 500.7L913.6 498.7L918.1 502.6L921.6 502.0L919.3 497.4L917.0 492.2L914.7 488.2L919.3 485.6L925.0 484.3L929.5 484.9L933.5 486.2L934.1 480.9L937.5 485.6L942.1 485.6L950.0 484.5L956.9 485.6L960.8 488.2L964.3 493.5L969.4 493.5L975.7 490.2L979.6 488.2L983.6 490.8L987.0 496.1L992.2 501.3L995.0 506.5L993.3 513.0L993.3 518.1L996.7 519.4L996.2 524.6L1000.1 532.2L1003.6 536.1L1005.8 542.4L1011.5 548.7L1014.4 552.1L1020.1 551.2L1023.3 544.3L1024.9 532.2L1021.8 522.0L1018.6 510.4L1016.1 505.2L1012.7 496.1L1009.5 486.9L1008.7 480.3L1010.4 472.3L1014.4 464.3L1018.4 458.9L1025.2 454.2L1028.6 450.8L1034.3 446.7L1038.3 439.9L1045.7 437.2L1048.5 437.8L1051.4 431.7L1058.2 426.8L1063.9 426.8L1068.5 422.0L1076.1 418.8L1075.9 410.8L1072.2 400.2L1070.8 394.9L1066.2 394.5L1066.2 389.5L1067.3 380.9L1065.1 375.1L1065.1 366.4L1065.6 360.5L1070.8 357.5L1069.1 363.4L1068.5 370.7L1071.3 376.5L1073.6 380.9L1070.8 389.5L1071.3 391.7L1075.3 385.2L1078.7 379.4L1081.6 372.9L1081.0 367.8L1077.0 360.5L1075.9 356.1L1079.9 360.5L1083.1 365.9L1089.0 359.0L1092.4 353.1L1093.5 347.1L1092.4 343.4L1093.0 341.2L1097.0 341.5L1102.7 340.4L1109.5 338.2L1117.5 334.4L1112.9 332.9L1104.9 335.9L1098.1 336.7L1097.5 335.1L1104.9 332.1L1112.9 330.9L1118.0 330.2L1122.0 329.4L1123.2 324.5L1125.4 327.6L1127.7 327.6L1131.7 326.0L1135.7 326.8L1139.7 325.0L1138.5 319.9L1136.6 318.9L1139.1 323.0L1133.4 323.8L1131.4 319.9L1127.7 315.3L1129.4 312.2L1132.3 309.9L1130.0 306.8L1131.1 302.9L1135.7 296.7L1137.4 293.5L1143.7 291.2L1149.4 288.8L1152.8 284.0L1159.6 283.2L1165.3 280.8L1169.9 278.4L1173.6 275.7L1172.1 271.2L1179.0 270.4L1184.1 268.8L1191.5 265.5L1197.2 262.3L1201.7 259.0L1201.2 262.3L1200.6 267.2L1204.0 268.0L1202.9 269.6L1196.6 272.8L1187.5 278.4L1183.0 284.0L1183.0 291.2L1189.2 297.5L1194.9 293.5L1201.7 287.2L1209.7 280.8L1218.8 277.6L1230.2 272.8L1241.6 268.0L1248.4 263.1L1254.1 256.6L1248.4 246.7L1247.3 240.0L1240.5 248.3L1235.3 256.6L1231.4 262.3L1222.2 259.8L1215.4 260.7L1208.6 256.6L1201.7 252.5L1197.8 243.4L1196.1 236.7L1200.6 226.6L1192.6 224.0L1185.8 224.9L1180.1 222.3L1192.6 221.5L1204.0 214.6L1204.6 208.6L1196.1 202.5L1181.2 203.4L1169.9 207.7L1157.3 214.6L1147.1 223.2L1139.1 231.6L1132.3 240.0L1126.0 242.5L1117.5 246.7L1109.5 251.6L1102.7 255.7L1098.1 263.1L1094.7 266.4L1100.4 263.1L1106.1 254.9L1115.2 248.3L1127.7 242.5L1133.4 235.0L1140.2 226.6L1143.1 220.6L1148.2 212.9L1156.2 206.0L1167.6 200.7L1173.3 192.0L1180.1 184.9L1196.1 184.0L1213.1 183.1L1230.2 184.9L1253.0 184.9L1253.0 94.7L1059.4 94.7L1030.9 104.6L1036.6 118.2L1037.7 133.5L1041.1 146.7L1036.6 155.9L1029.8 163.3L1025.2 166.9L1018.4 161.4L1013.8 152.2L1005.8 139.2L1001.3 124.0L999.0 104.6L999.0 94.7L455.7 94.7Z" fill="#f9f9f7" stroke="#9ecbe6" stroke-width=".7"/>
<path d="M473.9 174.5L483.0 177.7L501.3 181.3L510.4 188.4L516.1 197.2L524.6 202.5L529.7 209.4L532.0 216.0L528.6 217.7L518.3 213.7L510.4 209.4L502.4 204.2L495.6 199.0L487.6 192.0L479.6 186.7Z" fill="#f3f5ee" stroke="#9ecbe6" stroke-width=".7"/><path d="M421.5 110.5L436.3 114.4L434.1 125.9L437.5 137.3L444.3 148.5L443.2 153.1L432.9 144.8L424.9 129.7L420.4 120.2Z" fill="#f3f5ee" stroke="#9ecbe6" stroke-width=".7"/><path d="M1207.4 240.9L1216.6 246.7L1230.2 249.2L1224.5 256.6L1215.4 254.9L1206.3 250.0L1202.9 246.7Z" fill="#f3f5ee" stroke="#9ecbe6" stroke-width=".7"/><path d="M1201.7 190.2L1224.5 195.5L1232.5 204.2L1221.1 204.2L1212.0 199.0Z" fill="#f3f5ee" stroke="#9ecbe6" stroke-width=".7"/><path d="M1261.0 229.9L1261.0 214.6L1275.8 197.2L1287.2 170.5L1300.8 159.6L1310.0 159.6L1310.0 229.9Z" fill="#f3f5ee" stroke="#9ecbe6" stroke-width=".7"/><path d="M968.8 591.0L975.1 586.1L988.8 579.9L996.7 578.1L1007.0 576.2L1018.4 576.8L1027.5 582.4L1038.9 586.1L1049.1 591.0L1058.2 597.2L1070.8 602.0L1083.3 606.9L1091.3 613.0L1090.1 615.4L1076.5 616.6L1053.7 616.6L1057.1 610.6L1048.0 606.9L1041.1 597.2L1027.5 595.9L1019.5 590.4L1010.4 590.4L1004.7 584.9L993.3 582.4L986.5 588.6L973.9 592.9Z" fill="#f3f5ee" stroke="#9ecbe6" stroke-width=".7"/><path d="M1045.7 552.5L1050.8 557.5L1052.5 565.0L1051.4 568.8L1044.6 563.8L1044.6 557.5Z" fill="#f3f5ee" stroke="#9ecbe6" stroke-width=".7"/><path d="M1036.6 532.2L1048.0 531.6L1049.1 533.5L1041.1 534.8Z" fill="#f3f5ee" stroke="#9ecbe6" stroke-width=".7"/><path d="M1050.3 529.7L1059.4 534.8L1057.1 541.1L1056.0 537.3Z" fill="#f3f5ee" stroke="#9ecbe6" stroke-width=".7"/><g clip-path="url(#landclip)"><g filter="url(#bl)"><path d="M852.3 125.0L1229.6 125.0L1229.6 177.4L1166.7 203.6L1135.3 229.8L1098.6 263.9L1072.4 274.4L1040.9 282.2L1030.4 298.0L1004.2 298.0L988.5 271.8L983.3 245.5L967.6 229.8L936.1 222.0L915.1 219.3L883.7 214.1L854.9 203.6Z" fill="#e2eeda"/><path d="M443.4 125.0L585.0 125.0L621.6 177.4L642.6 206.2L537.8 206.2L516.8 187.9L474.9 156.4Z" fill="#f1f5ee"/><path d="M464.4 135.5L543.0 140.7L585.0 182.7L569.2 203.6L532.5 203.6L506.3 177.4Z" fill="#e2eeda"/><path d="M1140.0 200.0L1229.0 175.0L1229.0 335.0L1160.0 335.0L1150.0 270.0Z" fill="#e2eeda"/><path d="M705.5 460.4L747.4 491.9L778.9 544.3L799.8 596.7L768.4 612.4L736.9 544.3L705.5 502.4Z" fill="#f1f5ee"/><path d="M799.8 544.3L815.6 596.7L831.3 612.4L810.3 612.4L797.2 570.5Z" fill="#f1f5ee"/><path d="M988.5 599.3L1093.3 586.2L1093.3 615.0L988.5 615.0Z" fill="#f1f5ee"/></g></g>
<g clip-path="url(#usclip)"><g filter="url(#bl2)"><path d="M419.0 134.0L1226.0 134.0L1226.0 610.0L419.0 610.0Z" fill="#fbfb7a"/><path d="M581.6 288.0L590.1 282.9L597.0 284.6L602.1 294.0L579.8 294.0Z" fill="#f9f9f7"/><path d="M710.5 217.4L722.5 215.7L727.6 222.5L739.6 224.2L743.0 214.0L743.0 207.1L759.9 207.1L759.9 258.4L739.6 260.2L727.6 256.7L717.3 258.4L705.3 255.0L698.5 251.6L703.6 244.8L710.5 232.8L708.8 224.2Z" fill="#f9f9f7"/><path d="M556.5 292.7L571.9 285.8L589.0 283.3L597.5 285.8L602.7 292.7L603.5 301.2L599.2 308.1L589.0 309.8L578.7 313.2L573.6 320.0L549.6 320.0L547.9 309.8L551.3 299.5Z" fill="#f9f9f7"/><path d="M739.6 273.8L751.5 273.8L751.5 282.4L743.0 284.1L739.6 279.0Z" fill="#f9f9f7"/><path d="M570.2 321.8L580.4 321.8L578.7 333.7L585.6 350.0L570.2 350.0Z" fill="#f9f9f7"/><path d="M711.2 216.1L723.2 221.3L728.4 224.7L738.6 219.6L743.8 212.7L738.6 206.7L860.1 206.7L849.8 211.0L843.9 220.4L837.9 225.5L829.3 229.8L827.6 235.0L834.4 243.5L849.8 252.1L863.5 257.2L877.2 265.8L894.3 270.9L909.7 276.0L918.3 284.6L925.1 294.0L865.2 294.0L861.8 282.9L853.3 276.0L839.6 270.9L831.0 273.5L824.2 276.0L808.8 282.9L784.8 284.6L774.6 279.4L766.0 273.5L757.4 274.3L751.5 282.9L740.3 279.4L738.6 272.6L740.3 264.9L731.8 256.3L707.8 257.2L699.3 252.9L705.3 246.9L711.2 236.7L708.7 224.7Z" fill="#f9f9f7"/><path d="M829.3 207.6L853.3 207.6L848.1 212.7L843.9 220.4L837.9 225.5L831.0 228.1Z" fill="#f9f9f7"/><path d="M925.1 294.0L918.3 284.6L928.6 282.9L938.8 288.0L940.5 294.0Z" fill="#f9f9f7"/><path d="M738.6 273.5L751.5 273.5L751.5 284.6L740.3 279.4Z" fill="#f9f9f7"/><path d="M959.0 229.8L1030.9 229.8L1030.9 294.0L959.0 294.0Z" fill="#f9f9f7"/><path d="M1101.9 273.5L1109.6 273.5L1109.6 294.0L1101.9 294.0Z" fill="#f9f9f7"/><path d="M549.0 294.0L604.7 294.0L604.7 311.1L573.0 311.1L573.0 319.7L549.0 319.7Z" fill="#f9f9f7"/><path d="M571.3 320.5L573.0 326.5L578.1 331.6L581.6 340.2L586.7 348.8L593.5 355.6L598.7 362.4L607.2 369.3L610.6 379.6L615.8 389.8L624.3 396.7L631.2 403.5L631.2 420.6L571.3 365.9Z" fill="#f9f9f7"/><path d="M605.5 294.0L610.6 294.0L615.8 300.8L612.4 303.4L607.2 299.1Z" fill="#f9f9f7"/><path d="M660.3 412.1L670.5 409.5L679.1 413.8L680.8 427.5L675.7 441.2L667.1 444.6L662.0 434.3L658.6 422.3Z" fill="#f9f9f7"/><path d="M745.5 355.6L754.0 345.3L757.4 352.2L764.3 362.4L774.6 365.9L774.6 392.9L754.0 392.9L740.3 392.9L730.1 389.8L728.4 379.6L736.9 369.3L742.0 362.4Z" fill="#f9f9f7"/><path d="M774.6 354.7L822.5 352.2L832.7 345.3L846.4 343.6L851.6 350.5L849.8 365.9L851.6 374.4L843.0 377.8L836.2 386.4L831.0 391.5L819.0 383.0L812.2 386.4L798.5 392.9L774.6 392.9Z" fill="#f9f9f7"/><path d="M839.6 297.4L897.8 296.6L901.2 304.3L894.3 312.8L889.2 321.4L880.6 323.1L870.4 321.4L860.1 328.2L849.8 326.5L843.0 319.7L846.4 309.4L849.8 300.8Z" fill="#f9f9f7"/><path d="M858.4 350.5L863.5 345.3L870.4 343.6L877.2 348.8L878.9 355.6L870.4 360.7L861.8 360.7Z" fill="#f9f9f7"/><path d="M925.1 323.1L935.4 316.2L940.5 324.8L959.0 324.8L959.0 336.8L949.1 335.1L940.5 333.4L932.0 329.9Z" fill="#f9f9f7"/><path d="M899.5 294.0L937.1 294.0L935.4 307.7L928.6 311.1L909.7 311.1L902.9 304.3Z" fill="#f9f9f7"/><path d="M949.1 383.0L959.0 379.6L959.0 413.8L949.1 412.1L947.4 400.1Z" fill="#f9f9f7"/><path d="M764.3 395.0L784.8 395.0L781.4 403.5L774.6 406.9L767.7 403.5Z" fill="#f9f9f7"/><path d="M726.6 374.4L740.3 369.3L745.5 376.1L743.8 391.5L731.8 392.4Z" fill="#f9f9f7"/><path d="M971.0 294.0L1027.4 294.0L1027.4 319.7L1020.6 321.4L1020.6 353.9L1032.6 353.9L1030.9 369.3L1027.4 379.6L1020.6 389.8L1003.5 391.5L984.7 395.0L959.0 393.2L959.0 350.5L971.0 350.5L989.8 345.3L993.2 335.1L971.0 323.1Z" fill="#f9f9f7"/><path d="M959.0 294.0L971.0 294.0L971.0 323.1L959.0 323.1Z" fill="#f9f9f7"/><path d="M1027.4 334.2L1036.0 332.5L1039.4 338.5L1034.3 345.3L1025.7 348.8L1022.3 345.3L1024.0 338.5Z" fill="#f9f9f7"/><path d="M870.4 486.5L894.3 484.8L909.7 478.0L914.9 484.8L908.0 488.2L894.3 490.8L877.2 491.6Z" fill="#f9f9f7"/><path d="M514.8 205.9L546.5 205.9L549.0 214.4L545.6 229.8L547.3 243.5L542.2 253.8L538.8 260.6L525.1 253.8L521.7 240.1L516.5 223.0Z" fill="#f1f5ee"/><path d="M524.2 253.8L538.8 261.5L533.6 269.2L530.2 279.4L523.4 294.0L521.7 270.9Z" fill="#f1f5ee"/><path d="M631.2 238.4L641.5 235.0L651.7 226.4L658.6 229.8L650.0 240.1L648.3 253.8L639.7 258.9L636.3 250.4Z" fill="#f1f5ee"/><path d="M675.7 270.9L689.0 269.2L689.0 294.0L677.4 294.0L674.0 284.6Z" fill="#f1f5ee"/><path d="M676.2 265.3L686.5 263.6L693.4 270.4L695.1 285.8L689.9 296.1L684.8 291.0L678.0 285.8L676.2 275.6Z" fill="#f1f5ee"/><path d="M522.2 321.8L570.2 321.8L570.2 350.0L522.2 350.0Z" fill="#f1f5ee"/><path d="M1030.9 267.5L1123.3 267.5L1123.3 294.0L1030.9 294.0Z" fill="#f1f5ee"/><path d="M518.2 320.5L571.3 320.5L571.3 365.9L631.2 420.6L632.9 454.0L603.8 454.0L564.4 429.2L549.0 403.5L525.1 359.0Z" fill="#f1f5ee"/><path d="M547.3 294.0L561.0 294.0L555.9 311.1L549.0 319.7L545.6 311.1Z" fill="#f1f5ee"/><path d="M901.2 424.0L909.7 424.0L909.7 434.3L916.6 441.2L926.9 439.4L928.6 424.0L932.0 422.3L932.0 454.0L901.2 454.0Z" fill="#f1f5ee"/><path d="M996.6 374.4L1008.6 362.4L1020.6 355.6L1030.9 362.4L1027.4 376.1L1015.5 386.4L1003.5 388.1Z" fill="#f1f5ee"/><path d="M1027.4 294.0L1101.0 294.0L1101.0 319.7L1027.4 319.7Z" fill="#f1f5ee"/><path d="M904.6 454.0L928.6 454.0L928.6 476.2L911.5 476.2L901.2 471.1Z" fill="#f1f5ee"/><path d="M528.5 223.0L537.1 221.3L538.8 229.8L533.6 235.0L527.7 231.5Z" fill="#fbfb7a"/><path d="M841.3 210.1L845.6 207.6L853.3 206.7L853.3 199.9L857.5 199.9L858.4 209.3L849.8 212.7L843.9 219.6Z" fill="#fbfb7a"/><path d="M959.0 281.2L984.7 281.2L986.4 294.0L959.0 294.0Z" fill="#fbfb7a"/><path d="M1075.4 276.0L1089.0 273.5L1101.0 273.5L1101.0 294.0L1077.1 294.0L1071.9 284.6Z" fill="#fbfb7a"/><path d="M976.1 304.3L996.6 306.0L993.2 311.1L984.7 314.5L976.1 321.4L959.0 323.1L959.0 316.2L967.6 311.1Z" fill="#fbfb7a"/><path d="M998.4 347.0L1005.2 348.8L1005.2 355.6L999.2 354.7Z" fill="#fbfb7a"/><path d="M1046.3 300.8L1051.4 299.1L1061.7 302.6L1063.4 311.1L1056.5 312.8L1049.7 311.1Z" fill="#fbfb7a"/><path d="M1078.8 294.0L1092.5 294.0L1094.2 300.8L1087.3 304.3L1082.2 300.8Z" fill="#fbfb7a"/><path d="M1085.6 319.7L1089.0 311.1L1101.0 309.4L1101.0 319.7Z" fill="#fbfb7a"/><path d="M916.6 471.1L928.6 471.1L928.6 484.8L916.6 484.8Z" fill="#fbfb7a"/><path d="M576.4 207.6L602.9 207.6L602.9 219.6L593.5 223.0L583.3 219.6L578.1 214.4Z" fill="#fbe6b8"/><path d="M561.0 240.1L567.9 236.7L573.0 243.5L579.8 252.1L588.4 243.5L595.2 235.0L602.9 236.7L603.8 255.5L583.3 256.3L573.0 260.6L566.2 253.8L561.0 248.6Z" fill="#fbe6b8"/><path d="M573.0 265.8L581.6 257.2L604.7 256.3L609.8 264.0L605.5 276.0L600.4 284.6L591.8 281.2L583.3 277.7L573.0 276.0Z" fill="#fbe6b8"/><path d="M530.2 288.0L537.1 284.6L542.2 294.0L528.5 294.0Z" fill="#fbe6b8"/><path d="M604.7 223.0L612.4 219.6L619.2 229.8L626.9 240.1L631.2 250.4L624.3 258.9L614.1 264.0L607.2 260.6L604.7 243.5Z" fill="#fbe6b8"/><path d="M602.9 276.0L610.6 270.9L615.8 279.4L612.4 294.0L602.9 294.0Z" fill="#fbe6b8"/><path d="M644.9 206.7L689.0 206.7L689.0 294.0L672.3 294.0L672.3 281.2L667.1 279.4L662.0 270.9L658.6 260.6L663.7 252.1L658.6 243.5L658.6 229.8L653.4 223.0L648.3 214.4Z" fill="#fbe6b8"/><path d="M525.7 292.7L532.5 285.8L539.4 291.0L541.9 302.9L537.6 309.8L527.4 309.8L524.8 301.2Z" fill="#fbe6b8"/><path d="M604.4 282.4L612.9 272.1L619.8 275.6L623.2 292.7L630.0 297.8L647.2 292.7L654.0 280.7L671.1 279.0L671.1 306.4L660.8 313.2L654.0 320.0L604.4 320.0L604.4 309.8L616.4 302.9L609.5 292.7Z" fill="#fbe6b8"/><path d="M689.9 234.5L693.4 241.3L700.2 246.5L698.5 265.3L688.2 265.3L678.0 261.9L671.1 270.4L669.4 279.0L654.0 280.7L650.6 272.1L654.0 265.3L660.8 258.4L664.3 246.5L671.1 241.3Z" fill="#fbe6b8"/><path d="M696.8 287.5L705.3 292.7L720.7 284.1L739.6 289.2L751.5 296.1L759.9 299.5L759.9 313.2L739.6 308.1L722.5 302.9L708.8 301.2L698.5 296.1Z" fill="#fbe6b8"/><path d="M671.1 323.5L678.0 316.6L693.4 316.6L719.0 325.2L736.1 313.2L751.5 321.8L759.9 320.0L759.9 335.4L671.1 335.4Z" fill="#fbe6b8"/><path d="M636.9 321.8L671.1 321.8L671.1 350.0L636.9 350.0Z" fill="#fbe6b8"/><path d="M844.7 240.1L853.3 229.8L868.7 223.0L873.8 214.4L882.4 213.6L887.5 219.6L899.5 222.1L913.2 223.3L902.9 230.7L891.8 238.0L887.5 243.5L901.2 242.1L906.3 250.4L904.6 258.9L894.3 262.3L882.4 257.2L868.7 252.1L856.7 248.6L846.4 245.2Z" fill="#fbe6b8"/><path d="M913.2 264.0L920.0 259.8L932.0 259.8L937.1 265.8L935.4 276.0L928.6 279.4L918.3 276.0L913.2 270.9Z" fill="#fbe6b8"/><path d="M689.0 214.4L697.6 216.1L702.7 229.8L699.3 243.5L689.0 250.4Z" fill="#fbe6b8"/><path d="M695.8 288.0L706.1 284.6L719.8 288.0L731.8 294.0L695.8 294.0Z" fill="#fbe6b8"/><path d="M752.3 284.6L760.9 286.3L762.6 294.0L752.3 294.0Z" fill="#fbe6b8"/><path d="M1109.6 272.6L1123.3 270.9L1130.1 267.5L1147.2 232.4L1164.3 235.0L1169.5 264.0L1174.6 274.3L1164.3 282.9L1147.2 294.0L1109.6 294.0Z" fill="#fbe6b8"/><path d="M525.1 294.0L542.2 294.0L542.2 306.0L537.1 311.1L526.8 309.4Z" fill="#fbe6b8"/><path d="M614.1 359.0L620.9 353.9L631.2 350.5L637.2 343.6L637.2 393.2L629.5 393.2L620.9 383.0L615.8 372.7Z" fill="#fbe6b8"/><path d="M604.7 294.0L672.3 294.0L672.3 319.7L604.7 319.7Z" fill="#fbe6b8"/><path d="M638.0 320.5L689.0 320.5L689.0 393.2L638.0 393.2Z" fill="#fbe6b8"/><path d="M638.9 394.1L689.0 394.1L689.0 406.9L672.3 403.5L662.0 406.1L646.6 409.5L639.7 403.5Z" fill="#fbe6b8"/><path d="M684.2 429.2L689.0 427.5L689.0 448.0L685.1 444.6Z" fill="#fbe6b8"/><path d="M689.0 311.1L706.1 316.2L723.2 314.5L738.6 312.8L750.6 319.7L751.5 335.1L689.0 335.1Z" fill="#fbe6b8"/><path d="M752.3 305.1L779.7 306.0L791.7 311.1L798.5 319.7L808.8 316.2L819.0 311.1L836.2 311.1L839.6 321.4L829.3 331.6L808.8 336.8L798.5 345.3L784.8 350.5L774.6 350.5L771.1 335.1L752.3 335.1Z" fill="#fbe6b8"/><path d="M689.0 335.9L774.6 335.9L774.6 350.5L760.9 350.5L754.0 345.3L745.5 355.6L742.0 362.4L736.9 369.3L728.4 374.4L714.7 376.1L699.3 374.4L695.0 392.9L689.0 392.9Z" fill="#fbe6b8"/><path d="M695.0 376.1L714.7 377.0L726.6 383.0L731.8 392.9L695.0 392.9Z" fill="#fbe6b8"/><path d="M695.0 394.1L730.1 396.7L733.5 405.2L726.6 417.2L730.1 430.9L723.2 454.0L695.0 454.0Z" fill="#fbe6b8"/><path d="M689.0 394.1L695.0 394.1L695.0 454.0L689.0 454.0Z" fill="#fbe6b8"/><path d="M851.6 350.5L858.4 350.5L861.8 360.7L870.4 360.7L878.9 355.6L894.3 350.5L894.3 343.6L904.6 350.5L911.5 365.9L918.3 379.6L921.7 393.2L911.5 400.1L860.1 400.9L858.4 392.9L836.2 392.9L836.2 386.4L843.0 377.8L851.6 374.4Z" fill="#fbe6b8"/><path d="M894.3 343.6L902.9 335.1L911.5 328.2L925.1 328.2L935.4 333.4L949.1 336.8L959.0 338.5L959.0 376.1L949.1 379.6L935.4 381.3L932.0 389.8L921.7 393.2L918.3 379.6L911.5 365.9L904.6 350.5Z" fill="#fbe6b8"/><path d="M849.8 396.7L860.1 400.9L911.5 400.9L908.0 410.4L902.9 424.0L899.5 439.4L897.8 448.9L865.2 448.9L865.2 454.0L836.2 454.0L836.2 439.4L825.9 439.4L819.0 434.3L843.0 430.9L849.8 413.8Z" fill="#fbe6b8"/><path d="M798.5 412.1L808.8 410.4L825.9 413.8L851.6 412.1L860.1 413.8L860.1 434.3L853.3 434.3L839.6 437.7L825.9 439.4L808.8 430.9L798.5 425.8Z" fill="#fbe6b8"/><path d="M764.3 434.3L778.0 430.9L791.7 434.3L805.4 436.0L819.0 437.7L836.2 439.4L836.2 454.0L764.3 454.0Z" fill="#fbe6b8"/><path d="M911.5 400.9L959.0 398.4L959.0 421.5L909.7 421.5Z" fill="#fbe6b8"/><path d="M1049.7 304.3L1060.0 303.4L1061.7 310.3L1051.4 311.1Z" fill="#fbe6b8"/><path d="M1034.3 352.2L1041.1 347.0L1054.8 340.2L1068.5 333.4L1082.2 328.2L1087.3 335.1L1092.5 343.6L1090.8 352.2L1085.6 359.0L1078.8 352.2Z" fill="#fbe6b8"/><path d="M1109.6 310.3L1130.1 308.5L1131.8 316.2L1123.3 318.0L1113.0 316.2Z" fill="#fbe6b8"/><path d="M1102.7 294.0L1130.1 294.0L1130.1 308.5L1111.3 308.5L1110.4 300.8L1102.7 300.8Z" fill="#fbe6b8"/><path d="M1085.6 328.2L1094.2 341.9L1092.5 355.6L1085.6 362.4L1078.8 352.2L1082.2 336.8Z" fill="#fbe6b8"/><path d="M1073.6 362.4L1082.2 360.7L1080.5 376.1L1075.4 383.0L1072.8 371.0Z" fill="#fbe6b8"/><path d="M1032.6 353.9L1078.8 352.2L1071.9 362.4L1061.7 365.9L1068.5 383.0L1071.9 400.1L1077.1 413.8L1070.2 424.0L1054.8 434.3L1041.1 441.2L1030.9 454.0L959.0 454.0L959.0 422.3L969.3 417.2L976.1 412.1L986.4 403.5L1005.2 396.7L1020.6 389.8L1027.4 379.6L1030.9 369.3Z" fill="#fbe6b8"/><path d="M959.0 400.9L1005.2 400.9L986.4 413.8L976.1 421.5L959.0 421.5Z" fill="#fbe6b8"/><path d="M689.0 454.0L870.4 454.0L870.4 493.4L829.3 525.9L825.9 543.0L791.7 505.3L760.9 503.6L723.2 463.4L689.0 471.1Z" fill="#fbe6b8"/><path d="M867.0 454.0L902.9 454.0L901.2 471.1L911.5 478.0L916.6 488.2L894.3 493.4L870.4 493.4Z" fill="#fbe6b8"/><path d="M930.3 454.0L959.0 454.0L959.0 483.1L935.4 483.1L930.3 476.2Z" fill="#fbe6b8"/><path d="M672.3 258.9L689.0 257.2L689.0 264.0L682.5 269.2L675.7 267.5Z" fill="#fbfb7a"/><path d="M656.6 331.2L662.6 334.6L662.6 339.7L657.4 338.9Z" fill="#fbfb7a"/><path d="M620.9 294.0L641.5 294.0L638.0 300.8L624.3 302.6Z" fill="#fbfb7a"/><path d="M658.6 304.3L672.3 304.3L672.3 319.7L665.4 319.7Z" fill="#fbfb7a"/><path d="M658.6 321.4L672.3 321.4L672.3 328.2L665.4 324.8Z" fill="#fbfb7a"/><path d="M1087.3 345.3L1094.2 343.6L1092.5 355.6L1086.5 360.7Z" fill="#fbfb7a"/><path d="M1048.0 389.8L1056.5 384.7L1060.0 389.8L1051.4 395.0Z" fill="#fbfb7a"/><path d="M959.0 430.9L962.4 430.9L965.8 454.0L959.0 454.0Z" fill="#fbfb7a"/><path d="M730.1 464.3L745.5 471.1L757.4 481.4L771.1 479.7L784.8 472.8L795.1 467.7L808.8 464.3L822.5 472.8L819.0 481.4L808.8 488.2L798.5 495.1L791.7 489.9L784.8 483.1L774.6 488.2L764.3 486.5L754.0 484.8L740.3 476.2L731.8 471.1Z" fill="#fbfb7a"/><path d="M779.7 454.0L808.8 454.0L805.4 460.8L791.7 466.0L781.4 462.6Z" fill="#fbfb7a"/><path d="M581.6 258.1L603.8 257.2L605.5 265.8L595.2 270.0L586.7 267.5L582.4 263.2Z" fill="#fbd27b"/><path d="M604.7 236.7L612.4 232.4L617.5 236.7L624.3 246.9L623.5 255.5L617.5 253.8L612.4 246.9L604.7 250.4Z" fill="#fbd27b"/><path d="M646.6 207.6L665.4 208.4L672.3 216.1L682.5 226.4L689.0 231.5L689.0 235.0L679.1 236.7L672.3 241.8L662.0 243.5L656.9 236.7L655.1 226.4L650.0 216.1Z" fill="#fbd27b"/><path d="M606.9 309.8L618.1 309.8L619.8 320.0L606.9 320.0Z" fill="#fbd27b"/><path d="M678.0 325.2L693.4 318.3L717.3 326.9L736.1 316.6L749.8 325.2L751.5 335.4L672.8 335.4Z" fill="#fbd27b"/><path d="M640.3 340.6L650.6 337.2L657.4 344.0L664.3 350.0L638.6 350.0Z" fill="#fbd27b"/><path d="M873.8 243.5L882.4 238.4L890.1 239.2L887.5 243.5L892.6 248.6L889.2 253.8L880.6 256.3L874.7 250.4Z" fill="#fbd27b"/><path d="M924.3 263.2L932.0 262.3L931.6 265.8L925.1 265.8Z" fill="#fbd27b"/><path d="M986.4 289.7L993.2 288.0L995.8 294.0L987.2 294.0Z" fill="#fbd27b"/><path d="M1147.2 233.2L1154.1 240.1L1152.4 250.4L1145.5 258.9L1140.4 269.2L1133.5 276.0L1128.4 282.9L1127.5 294.0L1137.0 294.0L1140.4 288.0L1150.6 281.2L1159.2 276.0L1162.6 270.9L1154.1 269.2L1147.2 270.9L1140.4 276.0L1135.2 270.9L1137.0 260.6L1142.1 245.2Z" fill="#fbd27b"/><path d="M1128.4 270.9L1140.4 269.2L1147.2 270.9L1160.9 270.9L1159.2 277.7L1147.2 284.6L1137.0 294.0L1127.5 294.0Z" fill="#fbd27b"/><path d="M607.2 310.3L617.5 310.3L618.3 319.7L607.2 319.7Z" fill="#fbd27b"/><path d="M639.7 338.5L650.0 335.1L662.0 340.2L665.4 350.5L658.6 353.9L655.1 362.4L646.6 369.3L639.7 369.3L636.3 359.0L634.6 348.8Z" fill="#fbd27b"/><path d="M653.4 362.4L662.0 353.9L672.3 350.5L685.9 352.2L689.0 362.4L689.0 372.7L682.5 379.6L672.3 381.3L662.0 377.8L655.1 371.0Z" fill="#fbd27b"/><path d="M672.3 319.7L689.0 318.0L689.0 335.1L672.3 335.1Z" fill="#fbd27b"/><path d="M689.0 321.4L709.5 319.7L731.8 316.2L745.5 323.1L750.6 335.1L689.0 335.1Z" fill="#fbd27b"/><path d="M757.4 312.8L769.4 311.1L784.8 319.7L781.4 326.5L771.1 328.2L764.3 333.4L757.4 333.4Z" fill="#fbd27b"/><path d="M699.3 341.9L714.7 338.5L731.8 336.8L740.3 345.3L747.2 350.5L736.9 359.0L726.6 367.6L714.7 365.9L704.4 359.0Z" fill="#fbd27b"/><path d="M706.1 383.0L714.7 381.3L716.4 386.4L707.8 388.1Z" fill="#fbd27b"/><path d="M695.8 396.7L723.2 398.4L728.4 405.2L719.8 413.8L709.5 417.2L699.3 413.8Z" fill="#fbd27b"/><path d="M695.0 422.3L709.5 424.0L714.7 436.0L711.2 454.0L695.0 454.0Z" fill="#fbd27b"/><path d="M860.1 389.8L867.0 383.0L877.2 386.4L887.5 376.1L899.5 376.1L911.5 383.0L916.6 389.8L911.5 400.1L860.1 400.9Z" fill="#fbd27b"/><path d="M904.6 348.8L918.3 343.6L928.6 340.2L940.5 336.8L959.0 336.8L959.0 348.8L945.7 353.9L938.8 365.9L935.4 379.6L925.1 383.0L916.6 376.1L911.5 362.4Z" fill="#fbd27b"/><path d="M861.8 403.5L877.2 403.5L890.9 398.4L909.7 401.8L906.3 413.8L899.5 424.0L894.3 436.0L897.8 448.0L867.0 448.0L861.8 434.3L868.7 424.0L860.1 413.8Z" fill="#fbd27b"/><path d="M800.2 417.2L808.8 412.1L819.0 417.2L825.9 420.6L836.2 415.5L844.7 420.6L843.0 429.2L834.4 430.9L824.2 432.6L812.2 429.2L801.9 424.0Z" fill="#fbd27b"/><path d="M849.8 400.1L858.4 396.7L860.1 413.8L853.3 412.1Z" fill="#fbd27b"/><path d="M771.1 441.2L781.4 436.0L791.7 442.9L798.5 454.0L771.1 454.0Z" fill="#fbd27b"/><path d="M916.6 413.8L945.7 412.1L959.0 413.8L959.0 421.5L911.5 421.5Z" fill="#fbd27b"/><path d="M959.0 328.2L971.0 324.8L988.1 326.5L991.5 333.4L979.5 341.9L969.3 347.0L959.0 348.8Z" fill="#fbd27b"/><path d="M1070.2 336.8L1078.8 333.4L1082.2 338.5L1075.4 341.1Z" fill="#fbd27b"/><path d="M1113.0 294.0L1128.4 294.0L1128.4 302.6L1118.1 302.6Z" fill="#fbd27b"/><path d="M1032.6 354.7L1048.0 353.9L1061.7 362.4L1054.8 372.7L1048.0 379.6L1044.6 389.8L1048.0 396.7L1061.7 400.1L1065.1 410.4L1058.2 420.6L1051.4 427.5L1039.4 430.9L1027.4 424.0L1017.2 425.8L1005.2 420.6L993.2 418.9L979.5 418.9L988.1 410.4L1005.2 401.8L1020.6 395.0L1027.4 384.7L1032.6 372.7L1032.6 362.4Z" fill="#fbd27b"/><path d="M969.3 405.2L981.2 403.5L993.2 405.2L979.5 413.8L969.3 417.2Z" fill="#fbd27b"/><path d="M959.0 424.0L976.1 422.3L988.1 422.3L1015.5 420.6L1027.4 424.0L1034.3 434.3L1027.4 444.6L1015.5 454.0L959.0 454.0Z" fill="#fbd27b"/><path d="M723.2 463.4L745.5 478.0L747.2 491.6L764.3 488.2L771.1 490.8L784.8 496.8L793.4 505.3L808.8 498.5L817.3 484.8L839.6 479.7L843.0 486.5L856.7 481.4L867.0 484.8L868.7 491.6L853.3 501.9L837.9 510.5L829.3 522.4L825.9 539.6L808.8 534.4L801.9 522.4L791.7 505.3L781.4 493.4L769.4 492.5L760.9 502.8L745.5 492.5L740.3 481.4L723.2 464.3Z" fill="#fbd27b"/><path d="M689.0 454.0L723.2 454.0L723.2 462.6L704.4 471.1L695.0 471.1L689.0 467.7Z" fill="#fbd27b"/><path d="M839.6 454.0L865.2 454.0L868.7 471.1L860.1 479.7L843.0 478.0L836.2 467.7Z" fill="#fbd27b"/><path d="M867.0 459.1L877.2 457.4L899.5 459.1L894.3 471.1L882.4 476.2L870.4 474.5Z" fill="#fbd27b"/><path d="M937.1 457.4L959.0 455.7L959.0 476.2L940.5 476.2Z" fill="#fbd27b"/><path d="M959.0 454.0L1030.9 454.0L1030.9 560.1L959.0 560.1Z" fill="#fbd27b"/><path d="M1044.6 381.3L1054.8 376.1L1065.1 383.0L1068.5 395.0L1051.4 396.7L1044.6 391.5Z" fill="#fbe6b8"/><path d="M998.4 436.0L1015.5 429.2L1030.9 430.9L1034.3 439.4L1024.0 448.0L1010.3 446.3L1001.8 442.9Z" fill="#fbe6b8"/><path d="M962.4 424.0L976.1 423.2L981.2 430.9L976.1 441.2L965.8 442.9Z" fill="#fbe6b8"/><path d="M996.6 510.5L1006.9 505.3L1015.5 507.0L1017.2 517.3L1010.3 522.4L1000.1 517.3Z" fill="#fbe6b8"/><path d="M959.0 454.0L967.6 454.0L967.6 474.5L959.0 476.2Z" fill="#fbe6b8"/><path d="M656.9 225.5L662.0 223.8L662.8 232.4L656.0 232.4Z" fill="#ef7b79"/><path d="M671.9 221.3L677.4 218.7L681.7 223.0L679.1 227.3L673.1 228.1Z" fill="#ef7b79"/><path d="M693.4 333.7L698.5 331.2L704.5 335.4L705.3 342.3L695.1 343.1Z" fill="#ef7b79"/><path d="M1135.2 291.4L1138.7 288.9L1139.5 294.0L1135.2 294.0Z" fill="#ef7b79"/><path d="M665.4 362.4L670.5 359.9L674.0 357.3L680.8 357.3L678.2 361.6L672.3 362.4L668.0 369.3L665.4 369.3Z" fill="#ef7b79"/><path d="M641.1 356.5L642.8 356.5L643.2 361.6L641.5 361.6Z" fill="#ef7b79"/><path d="M759.2 318.0L764.3 317.1L766.9 323.9L762.6 329.1L760.0 324.8Z" fill="#ef7b79"/><path d="M710.4 348.8L718.1 347.0L725.8 343.6L730.1 340.2L732.6 350.5L730.1 360.7L723.2 364.2L716.4 360.7L711.2 355.6Z" fill="#ef7b79"/><path d="M695.0 333.4L702.7 332.5L706.1 338.5L702.7 343.6L695.0 342.8Z" fill="#ef7b79"/><path d="M701.8 400.1L711.2 398.0L710.4 401.8L704.4 403.5Z" fill="#ef7b79"/><path d="M696.7 430.0L702.7 430.9L707.0 436.0L705.3 439.4L699.3 434.3Z" fill="#ef7b79"/><path d="M926.0 344.5L936.3 342.4L937.1 354.7L928.6 356.5L925.1 350.5Z" fill="#ef7b79"/><path d="M949.1 339.3L959.0 338.8L959.0 347.0L952.5 345.3Z" fill="#ef7b79"/><path d="M878.9 405.2L890.9 400.1L906.3 401.8L908.0 410.4L899.5 415.5L892.6 424.0L882.4 429.2L874.7 425.8L874.7 418.9L878.9 413.8Z" fill="#ef7b79"/><path d="M858.4 395.0L862.7 395.0L861.0 400.1L858.7 400.1Z" fill="#ef7b79"/><path d="M802.8 418.1L808.8 417.2L813.9 425.8L812.2 430.9L807.1 427.5Z" fill="#ef7b79"/><path d="M820.8 429.2L825.9 420.6L831.0 417.2L839.6 418.9L834.4 424.0L829.3 427.5L824.2 432.6Z" fill="#ef7b79"/><path d="M844.7 437.7L851.6 434.3L860.1 435.2L860.1 448.0L853.3 449.7L846.4 446.3Z" fill="#ef7b79"/><path d="M971.0 333.4L977.8 328.2L988.1 327.4L984.7 333.4L976.1 340.2L969.3 345.3L959.0 347.0L959.0 340.2L965.8 338.5Z" fill="#ef7b79"/><path d="M959.0 333.4L965.8 335.1L964.1 338.5L959.0 338.8Z" fill="#ef7b79"/><path d="M1130.1 294.0L1137.0 294.0L1131.8 300.8Z" fill="#ef7b79"/><path d="M1018.0 414.6L1022.7 413.8L1022.0 423.2L1017.2 422.3Z" fill="#ef7b79"/><path d="M984.7 429.2L993.2 425.8L1003.5 421.5L1008.6 424.0L1006.9 430.9L998.4 436.0L989.8 439.4L983.0 436.0Z" fill="#ef7b79"/><path d="M962.4 451.4L974.4 448.9L979.5 452.3L977.8 454.0L962.4 454.0Z" fill="#ef7b79"/><path d="M793.4 505.3L801.9 501.9L808.8 496.8L815.6 486.5L825.9 483.1L837.9 479.7L841.3 484.8L839.6 493.4L843.0 498.5L836.2 503.6L829.3 505.3L822.5 510.5L819.0 519.0L825.9 522.4L822.5 529.3L815.6 534.4L808.8 534.4L805.4 522.4L800.2 513.9Z" fill="#ef7b79"/><path d="M746.3 492.0L757.4 490.8L765.1 488.2L769.4 492.5L764.3 498.5L760.9 503.3L754.0 499.3Z" fill="#ef7b79"/><path d="M853.3 483.9L857.5 483.1L858.4 489.9L855.0 490.8Z" fill="#ef7b79"/><path d="M887.5 470.3L894.3 468.5L898.6 471.1L892.6 475.4L888.3 474.5Z" fill="#ef7b79"/><path d="M942.3 466.8L949.1 466.0L950.8 475.4L944.8 475.4Z" fill="#ef7b79"/><path d="M962.4 478.0L976.1 472.8L993.2 464.3L1010.3 462.6L1011.2 479.7L1008.6 493.4L1005.2 503.6L1000.1 505.3L995.8 505.3L991.5 496.8L984.7 488.2L974.4 488.2L965.8 484.8Z" fill="#ef7b79"/><path d="M995.8 519.0L1003.5 517.3L1010.3 522.4L1012.0 529.3L1005.2 534.4L1000.1 531.0Z" fill="#ef7b79"/><path d="M1017.2 522.4L1021.5 521.6L1022.3 529.3L1018.0 531.0Z" fill="#ef7b79"/><path d="M1005.2 537.8L1013.8 536.1L1015.5 539.6L1008.6 541.3Z" fill="#ef7b79"/><path d="M1013.8 546.4L1020.6 543.0L1020.6 549.8L1015.5 551.5Z" fill="#ef7b79"/><path d="M812.2 513.9L819.0 512.2L824.2 517.3L819.0 519.9L813.9 519.0Z" fill="#fbd27b"/><path d="M999.2 470.3L1010.3 465.1L1010.7 479.7L1001.8 478.8Z" fill="#fbd27b"/><path d="M717.2 358.2L720.7 356.5L721.5 359.9L718.4 361.1Z" fill="#b0555c"/><path d="M725.8 358.2L729.2 357.7L728.7 361.1Z" fill="#b0555c"/><path d="M889.2 404.4L896.0 403.5L900.3 412.1L896.9 416.3L890.9 410.4Z" fill="#b0555c"/><path d="M755.7 498.8L762.6 498.8L760.9 502.9Z" fill="#b0555c"/><path d="M900.0 400.0L1014.4 400.0L1014.4 421.7L900.0 421.7Z" fill="#fbe6b8"/><path d="M906.9 400.0L948.1 400.0L934.3 411.4L911.4 420.6L900.0 421.2L900.0 417.2L905.7 413.7Z" fill="#fbd27b"/><path d="M900.0 400.0L906.9 400.0L905.7 413.7L900.0 417.2Z" fill="#ef7b79"/><path d="M938.9 414.9L940.1 406.9L949.2 402.3L957.2 406.9L964.1 411.4L957.2 420.6L943.5 420.6Z" fill="#fbfb7a"/><path d="M948.1 400.0L964.1 400.0L961.8 406.9L950.3 409.2Z" fill="#f9f9f7"/><path d="M968.7 403.4L975.5 404.6L974.4 417.2L968.7 420.6Z" fill="#fbd27b"/><path d="M975.5 405.7L987.0 404.6L984.7 410.3L977.8 411.4Z" fill="#fbfb7a"/><path d="M1003.0 400.0L1060.2 400.0L1060.2 422.9L1029.3 424.6L1014.4 419.5L1009.9 411.4Z" fill="#fbd27b"/><path d="M969.2 418.3L972.1 418.1L971.5 421.2L969.8 421.2Z" fill="#ef7b79"/><path d="M900.0 421.7L930.9 421.7L929.8 482.4L914.9 482.4L913.7 476.7L900.0 476.7Z" fill="#f1f5ee"/><path d="M911.4 422.9L926.3 422.9L922.9 434.3L914.9 437.8L910.3 432.0Z" fill="#fbfb7a"/><path d="M900.0 443.5L906.9 445.8L913.7 454.9L911.4 464.1L900.0 468.7Z" fill="#fbfb7a"/><path d="M914.9 464.1L928.6 459.5L928.6 482.4L916.0 482.4L914.9 474.4Z" fill="#fbfb7a"/><path d="M900.0 433.2L910.3 432.0L913.7 437.8L906.9 441.2L900.0 442.3Z" fill="#fbd27b"/><path d="M900.0 464.1L906.9 466.4L904.6 473.2L900.0 474.4Z" fill="#fbe6b8"/><path d="M932.0 421.7L962.4 422.3L968.7 480.1L937.8 476.7L938.9 482.4L929.8 484.7L930.9 421.7Z" fill="#fbfb7a"/><path d="M934.3 437.8L943.5 434.3L953.8 436.6L954.9 445.8L948.1 448.1L937.8 450.3L933.2 448.1Z" fill="#f1f5ee"/><path d="M930.9 468.7L940.1 464.1L948.1 454.9L957.2 448.1L961.8 437.8L959.5 422.9L962.4 422.3L968.7 480.1L938.9 476.7L930.9 480.1Z" fill="#fbe6b8"/><path d="M949.2 425.2L959.5 424.0L960.6 434.3L953.8 433.2Z" fill="#fbe6b8"/><path d="M962.4 434.3L968.7 480.1L938.9 476.7L940.1 470.9L945.8 464.1L953.8 457.2L961.8 450.3Z" fill="#fbd27b"/><path d="M942.3 467.5L948.1 466.4L950.3 474.4L946.9 475.5L944.1 472.1Z" fill="#ef7b79"/><path d="M962.4 422.3L1014.4 419.5L1013.3 462.4L1009.9 480.1L968.7 480.1Z" fill="#fbd27b"/><path d="M962.4 422.9L987.0 422.9L980.1 428.6L975.5 434.3L973.2 440.1L968.7 445.8L966.9 450.3L964.1 437.8Z" fill="#fbe6b8"/><path d="M968.7 448.1L980.1 444.6L991.5 443.5L1003.0 445.8L1005.3 450.3L991.5 449.2L980.1 450.3L969.8 452.6Z" fill="#fbe6b8"/><path d="M958.4 456.1L964.1 453.8L973.2 450.3L980.1 449.8L977.8 453.8L970.9 457.2L964.1 460.6L958.9 460.1Z" fill="#ef7b79"/><path d="M969.8 475.5L980.1 473.2L991.5 470.9L996.1 467.5L1003.0 464.1L1009.9 462.4L1013.3 464.1L1012.7 468.7L1005.3 470.9L1000.7 475.5L999.6 480.1L969.8 480.1Z" fill="#ef7b79"/><path d="M999.6 474.4L1007.6 469.8L1011.0 473.2L1008.7 479.0L1001.8 480.1Z" fill="#fbd27b"/><path d="M989.3 422.9L1014.4 419.5L1029.3 424.6L1040.7 436.6L1031.6 448.1L1021.3 454.9L1013.3 461.8L1007.6 445.8L997.3 434.3Z" fill="#fbe6b8"/><path d="M1007.6 445.8L1014.4 442.3L1025.9 443.5L1032.7 446.9L1021.3 454.9L1013.3 462.4L1009.9 453.8Z" fill="#fbd27b"/><path d="M1029.3 424.6L1060.2 422.9L1071.6 413.7L1060.2 429.8L1048.8 437.8L1040.7 436.6Z" fill="#fbe6b8"/><path d="M1017.9 414.3L1023.0 414.3L1021.9 422.9L1017.3 423.5Z" fill="#ef7b79"/><path d="M982.4 436.6L989.3 433.2L993.8 428.6L1000.7 424.0L1007.6 422.3L1009.9 424.6L1003.0 429.8L998.4 433.2L991.5 438.9L984.7 438.3Z" fill="#ef7b79"/><path d="M937.8 476.7L968.7 480.1L1014.4 480.1L1016.7 507.0L968.7 507.0L937.8 487.0Z" fill="#fbd27b"/><path d="M963.5 477.8L969.8 480.1L1001.8 481.2L1009.9 480.1L1011.6 489.3L1009.9 507.0L997.3 507.0L991.5 498.4L985.8 490.4L980.1 487.0L973.2 485.8L965.2 482.4Z" fill="#ef7b79"/><path d="M1006.4 497.3L1013.3 496.1L1014.4 507.0L1007.6 507.0Z" fill="#fbd27b"/><path d="M900.0 476.7L914.9 476.7L914.9 487.0L900.0 487.0Z" fill="#f9f9f7"/><path d="M900.0 487.0L906.9 488.1L911.4 491.5L909.2 498.4L900.0 499.6Z" fill="#fbe6b8"/><path d="M958.4 282.1L976.8 278.8L993.5 283.8L995.1 297.1L980.1 300.5L963.4 297.1Z" fill="#fbfb7a"/><path d="M988.5 288.8L995.1 288.1L996.1 297.1L989.5 298.1Z" fill="#fbe6b8"/></g></g>
<g fill="none" stroke="#77777b" stroke-width="1.1" stroke-linejoin="round"><path d="M534.9 206.0L537.9 206.0L540.6 210.3L540.6 214.6L542.3 219.7L543.4 224.9L542.3 229.9L541.7 235.0L538.8 238.3L536.6 235.0L538.3 228.3L538.8 223.2L533.2 220.6L525.2 219.7L515.8 216.7L516.6 224.9L520.1 233.3L522.3 241.7L523.5 252.5L524.4 264.7L523.2 276.0L522.6 288.8L520.1 298.2L517.7 307.0L520.6 319.9L522.7 332.1L519.5 343.6L523.5 350.1L526.3 357.5L527.5 366.4L534.9 375.1L535.4 379.4L540.9 382.3L541.1 386.6L544.5 393.8L547.4 394.5L548.0 399.5L548.0 403.7L554.8 412.2L561.1 419.9L562.2 427.5L564.2 429.6L573.0 430.3L578.7 433.7L583.3 435.4L587.8 439.2L591.2 439.9L596.4 443.3L600.4 449.4L601.3 453.5L602.4 455.8L629.7 453.2L628.7 456.3L671.3 471.9L703.9 471.9L703.9 465.9L723.0 465.9L727.9 471.0L733.6 476.3L740.7 481.6L743.9 489.5L747.3 495.4L754.1 498.7L761.5 502.9L764.9 500.0L767.8 492.8L773.5 492.2L781.5 492.8L786.6 498.0L791.7 506.5L797.4 515.6L803.1 522.0L805.4 530.3L807.7 536.1L813.3 538.0L817.9 540.5L823.6 540.5L829.9 541.8L828.2 533.5L827.0 524.6L830.4 518.1L836.7 511.7L843.5 507.8L850.9 503.3L856.6 498.7L861.2 495.4L867.4 493.5L873.7 492.5L880.5 494.8L886.2 495.4L890.8 493.5L896.5 498.0L902.2 501.3L909.0 500.7L913.6 498.7L918.1 502.6L921.6 502.0L919.3 497.4L917.0 492.2L914.7 488.2L919.3 485.6L925.0 484.3L929.5 484.9L933.5 486.2L934.1 480.9L937.5 485.6L942.1 485.6L950.0 484.5L956.9 485.6L960.8 488.2L964.3 493.5L969.4 493.5L975.7 490.2L979.6 488.2L983.6 490.8L987.0 496.1L992.2 501.3L995.0 506.5L993.3 513.0L993.3 518.1L996.7 519.4L996.2 524.6L1000.1 532.2L1003.6 536.1L1005.8 542.4L1011.5 548.7L1014.4 552.1L1020.1 551.2L1023.3 544.3L1024.9 532.2L1021.8 522.0L1018.6 510.4L1016.1 505.2L1012.7 496.1L1009.5 486.9L1008.7 480.3L1010.4 472.3L1014.4 464.3L1018.4 458.9L1025.2 454.2L1028.6 450.8L1034.3 446.7L1038.3 439.9L1045.7 437.2L1048.5 437.8L1051.4 431.7L1058.2 426.8L1063.9 426.8L1068.5 422.0L1076.1 418.8L1075.9 410.8L1072.2 400.2L1070.8 394.9L1066.2 394.5L1066.2 389.5L1067.3 380.9L1065.1 375.1L1065.1 366.4L1065.6 360.5L1070.8 357.5L1069.1 363.4L1068.5 370.7L1071.3 376.5L1073.6 380.9L1070.8 389.5L1071.3 391.7L1075.3 385.2L1078.7 379.4L1081.6 372.9L1081.0 367.8L1077.0 360.5L1075.9 356.1L1079.9 360.5L1083.1 365.9L1089.0 359.0L1092.4 353.1L1093.5 347.1L1092.4 343.4L1093.0 341.2L1097.0 341.5L1102.7 340.4L1109.5 338.2L1117.5 334.4L1112.9 332.9L1104.9 335.9L1098.1 336.7L1097.5 335.1L1104.9 332.1L1112.9 330.9L1118.0 330.2L1122.0 329.4L1123.2 324.5L1125.4 327.6L1127.7 327.6L1131.7 326.0L1135.7 326.8L1139.7 325.0L1138.5 319.9L1136.6 318.9L1139.1 323.0L1133.4 323.8L1131.4 319.9L1127.7 315.3L1129.4 312.2L1132.3 309.9L1130.0 306.8L1131.1 302.9L1135.7 296.7L1137.4 293.5L1143.7 291.2L1149.4 288.8L1152.8 284.0L1159.6 283.2L1165.3 280.8L1169.9 278.4L1173.6 275.7L1171.0 270.4L1168.1 263.1L1164.2 261.5L1164.3 238.8L1158.5 234.2L1151.6 236.7L1148.0 232.5L1139.1 245.0L1136.0 253.3L1136.3 258.2L1130.0 266.4L1126.6 268.0L1123.2 268.0L1122.0 272.7L1085.6 272.8L1075.3 279.2L1067.3 285.6L1061.6 294.6L1040.0 294.6L1035.8 299.8L1037.5 306.0L1027.5 312.2L1014.9 316.9L997.9 324.8L990.2 322.2L989.9 315.3L995.6 311.5L997.6 304.5L1001.1 295.1L996.7 267.5L984.2 259.8L980.2 254.9L975.1 248.3L970.0 242.5L959.1 235.0L943.2 228.3L929.9 218.0L917.0 223.2L902.2 221.5L894.2 218.9L893.1 222.3L885.1 217.2L881.1 213.7L872.6 212.9L858.9 211.2L857.8 208.6L856.1 199.3L852.6 199.3L852.6 206.0L534.9 206.0Z"/><path d="M523.5 252.5L530.9 254.1L537.7 259.0L538.8 263.1L544.5 263.9L552.5 261.5L557.1 263.1L563.9 261.5L574.2 258.2L581.2 256.6L604.7 256.6"/><path d="M603.4 206.0L603.3 249.7L604.7 256.6L609.5 263.1L607.2 268.0L604.9 276.0L601.5 284.0L603.8 286.4L603.4 291.9L603.4 319.9"/><path d="M520.6 319.9L671.5 319.9"/><path d="M569.6 319.9L569.6 364.9L630.8 422.0"/><path d="M637.4 319.9L637.4 393.8L637.4 405.1L633.4 406.6L629.4 408.0L630.5 413.6L630.8 422.0L632.5 426.1L636.3 431.7L632.0 437.2L629.7 444.0L632.0 449.4L629.7 453.2"/><path d="M614.6 206.0L614.6 223.2L618.6 228.3L618.0 233.3L627.1 240.0L634.0 245.8L632.8 251.6L631.7 261.5L634.5 265.5L640.2 263.9L645.9 276.0L651.0 282.4L657.3 280.0L666.4 280.0L668.1 276.8L671.5 280.8L671.5 335.1L751.3 335.1"/><path d="M671.5 272.8L751.3 272.8"/><path d="M751.3 206.0L751.3 335.1"/><path d="M671.5 335.1L694.3 335.1"/><path d="M694.3 335.1L694.3 471.9"/><path d="M637.4 393.8L858.7 393.8"/><path d="M751.3 335.1L774.1 335.1L774.1 393.8"/><path d="M763.2 393.8L762.5 462.9L722.0 462.9"/><path d="M763.2 400.9L797.4 400.9L797.4 428.1L806.5 433.0L814.5 433.7L821.3 437.2L829.3 439.2L836.1 437.8L848.7 439.9L852.1 437.2L860.3 440.7"/><path d="M751.3 257.5L836.6 257.5"/><path d="M751.3 304.5L814.5 304.5L821.3 306.8L829.3 308.4L837.3 312.2"/><path d="M774.1 350.1L850.9 350.1"/><path d="M829.0 206.0L830.4 223.2L833.5 240.0L836.1 251.6L836.6 257.5L833.3 263.1L837.8 268.0L837.8 296.7L837.8 302.9L837.8 312.2L840.7 319.9L843.0 327.6L844.4 335.1L845.8 341.2L850.9 350.1L855.5 351.6L858.9 363.4L858.7 393.8L858.7 400.9L860.8 416.4L860.3 440.7L865.3 441.9L865.3 449.2L865.3 462.9L870.9 473.6L869.2 482.9L868.9 488.9L867.4 493.5"/><path d="M837.8 296.7L897.4 296.7"/><path d="M845.6 341.5L891.6 341.5L895.1 344.5"/><path d="M858.7 400.9L909.6 400.9L907.1 408.0L914.7 408.0"/><path d="M865.3 449.2L898.0 449.2"/><path d="M887.4 245.0L885.2 255.3L878.5 263.1L880.0 268.0L879.4 276.8L885.1 280.0L891.9 287.2L896.5 291.2L897.4 296.7L898.2 304.5L903.9 312.2L909.6 319.9L906.7 327.6L899.9 328.3L898.8 336.7L895.1 344.5L894.8 351.6L899.3 359.0L904.5 366.4L909.6 367.8L907.3 376.5L915.9 383.8L921.0 393.8L917.0 400.9L914.7 408.0L911.9 415.0L907.9 422.0L905.0 428.9L901.0 435.8L897.6 442.6L898.2 449.4L899.9 456.2L898.8 462.9L894.2 469.6L893.1 476.3L914.4 476.3L913.6 481.6L916.4 486.9"/><path d="M903.9 312.2L936.4 312.2"/><path d="M906.5 247.2L912.4 251.6L925.0 256.6L932.9 259.8L935.8 267.2L938.6 271.2"/><path d="M939.5 323.6L939.4 359.7L938.9 364.9L938.6 372.2L934.6 376.5L933.5 382.3"/><path d="M921.0 393.8L928.4 392.4L932.9 387.4L933.5 382.3L939.8 380.9L944.3 382.3L951.2 379.4L956.9 380.9L959.7 375.1L963.7 369.3L970.0 368.5L970.3 363.4L975.1 364.2L978.5 368.5L985.3 370.0L992.2 369.3L995.6 373.4L1000.1 370.7L1002.4 365.6L1008.1 360.5L1013.8 356.1L1017.2 348.6L1019.3 340.7"/><path d="M970.3 363.4L970.4 324.5"/><path d="M943.2 323.6L970.4 323.6L970.4 324.5L985.9 324.1"/><path d="M1019.3 315.3L1019.3 354.3L1073.2 354.3"/><path d="M917.0 400.9L933.5 400.9L933.5 398.8L983.3 399.5L1006.1 399.5L1072.2 400.2"/><path d="M907.9 422.0L989.9 422.0"/><path d="M931.8 422.0L930.7 449.4L928.7 464.3L929.5 485.6"/><path d="M961.4 422.0L966.2 451.5L968.8 458.9L967.7 469.6L968.2 476.3L969.8 480.3L1000.1 482.0L1001.9 484.9L1002.4 479.6L1008.7 480.3"/><path d="M938.6 476.3L968.2 476.3"/><path d="M938.6 476.3L940.3 485.6"/><path d="M989.9 422.0L987.0 426.1L996.2 435.8L1003.0 442.6L1008.1 449.4L1011.5 456.2L1015.2 462.3"/><path d="M989.9 422.0L997.9 419.2L1013.2 419.2L1013.2 421.3L1014.9 420.6L1028.6 424.7L1041.7 437.8"/><path d="M1006.1 399.5L1005.8 403.7L1001.3 406.6L995.6 408.7L989.9 411.5L985.3 414.3L979.6 417.8L976.0 422.0"/><path d="M983.3 399.5L998.4 390.9L1003.0 385.9L1010.4 389.5L1015.5 390.2L1021.8 386.6L1025.8 380.2L1029.2 373.6L1033.7 372.9L1038.3 367.1L1043.4 362.7L1044.0 358.3L1051.1 360.2L1056.5 364.9L1059.0 367.1L1056.5 373.6L1059.9 375.1L1067.3 379.4"/><path d="M995.6 373.4L997.9 380.9L1003.0 385.9"/><path d="M1031.1 354.3L1031.1 362.0L1037.2 358.3L1044.6 355.3L1049.1 356.1L1051.1 360.2"/><path d="M1073.2 354.3L1074.2 372.9L1081.6 372.9"/><path d="M1077.6 353.1L1085.0 347.9L1079.9 341.2L1081.0 335.1L1085.6 329.7L1094.7 335.1"/><path d="M1027.9 315.8L1027.9 319.9L1078.2 319.9L1085.6 329.7"/><path d="M1097.5 335.1L1099.2 330.6L1099.2 319.2L1101.9 308.4L1101.5 295.1L1100.9 272.7"/><path d="M1099.2 319.3L1118.6 319.3L1118.0 330.2"/><path d="M1118.6 319.9L1123.4 319.9L1125.4 324.5L1126.2 327.6"/><path d="M1101.9 308.7L1124.3 308.7L1129.8 306.5"/><path d="M1111.1 308.7L1112.3 295.1L1115.8 284.0L1120.9 276.8L1122.0 272.7"/><path d="M1130.9 303.2L1128.1 295.9L1126.8 268.0"/></g>
<clipPath id="lakeclip"><path d="M887.4 244.2L896.5 235.0L906.7 228.3L914.7 224.0L920.4 218.0L928.4 212.9L932.9 208.6L945.5 210.3L952.3 212.9L958.0 223.2L969.4 224.0L972.2 233.3L974.5 241.7L973.4 248.3L968.2 248.3L965.4 244.2L956.9 245.5L948.9 249.7L940.9 247.5L936.9 242.0L931.2 241.7L934.1 235.8L936.9 232.1L930.7 233.3L923.8 238.3L918.1 242.0L912.4 243.4L906.7 246.7L901.0 246.3L902.2 240.9L895.4 243.4Z"/><path d="M962.6 255.7L968.2 258.2L971.1 259.8L968.2 262.3L966.0 267.2L963.1 272.8L961.4 276.8L960.8 270.4L955.7 275.2L953.4 282.4L951.2 288.8L951.7 298.2L954.0 304.5L954.0 312.2L951.2 318.4L947.2 323.8L942.6 325.7L939.2 323.8L936.4 316.9L936.4 309.1L935.2 301.4L937.3 291.9L939.5 284.0L943.2 274.4L946.0 268.0L942.1 272.8L936.9 276.8L934.1 280.0L935.8 275.2L938.6 271.2L943.8 263.9L947.2 260.7L953.4 258.2L958.0 256.6Z"/><path d="M971.4 259.8L976.2 256.9L981.9 257.4L984.2 253.3L995.6 252.5L1004.7 254.9L1013.8 257.4L1019.5 263.1L1024.1 268.0L1028.0 275.2L1024.1 280.8L1016.1 278.4L1012.1 273.6L1007.0 268.8L1010.4 277.6L1006.4 285.6L1005.3 293.5L1004.1 299.8L997.9 304.5L996.2 296.7L993.9 289.6L991.0 287.7L986.5 290.4L980.8 294.8L983.6 288.8L987.0 284.0L987.6 276.0L987.0 271.2L985.3 267.2L978.5 263.9L973.9 261.5Z"/><path d="M1037.7 306.0L1034.9 310.7L1027.5 315.3L1024.1 317.6L1017.2 320.7L1010.4 324.5L1005.3 327.6L996.7 329.1L991.6 327.6L985.9 324.5L989.3 319.9L995.6 319.2L996.7 320.7L1003.6 316.1L1010.4 310.7L1018.4 309.5L1024.1 311.5L1027.5 307.6L1033.2 306.4Z"/><path d="M1027.5 299.8L1032.0 294.3L1037.7 291.2L1048.0 289.3L1057.1 290.4L1065.1 285.6L1067.9 288.8L1068.5 295.1L1065.1 297.1L1056.0 300.1L1048.0 299.0L1040.0 299.0L1035.5 300.6L1030.9 301.4Z"/><path d="M927.2 181.3L934.1 188.4L932.9 197.2L928.4 200.7L922.7 195.5L921.6 186.7Z"/><path d="M834.4 156.8L839.0 163.3L839.5 172.3L837.3 181.3L832.1 182.2L831.6 174.1L832.1 165.1L831.6 159.6Z"/><path d="M809.9 116.3L821.3 125.9L828.2 137.3L832.1 148.5L833.8 155.9L828.2 154.1L821.3 144.8L811.1 135.4L805.4 124.0Z"/><path d="M808.8 159.6L813.3 165.1L817.3 174.1L820.2 183.1L816.8 184.9L812.2 177.7L808.8 168.7L805.4 161.4Z"/><path d="M789.4 129.7L797.4 141.0L798.5 152.2L798.5 155.9L795.1 148.5L791.7 137.3Z"/><path d="M995.6 309.9L997.3 312.2L995.6 315.0L992.2 313.8Z"/></clipPath><path d="M887.4 244.2L896.5 235.0L906.7 228.3L914.7 224.0L920.4 218.0L928.4 212.9L932.9 208.6L945.5 210.3L952.3 212.9L958.0 223.2L969.4 224.0L972.2 233.3L974.5 241.7L973.4 248.3L968.2 248.3L965.4 244.2L956.9 245.5L948.9 249.7L940.9 247.5L936.9 242.0L931.2 241.7L934.1 235.8L936.9 232.1L930.7 233.3L923.8 238.3L918.1 242.0L912.4 243.4L906.7 246.7L901.0 246.3L902.2 240.9L895.4 243.4Z" fill="#dff2fc" stroke="#9ecbe6" stroke-width=".7"/><path d="M962.6 255.7L968.2 258.2L971.1 259.8L968.2 262.3L966.0 267.2L963.1 272.8L961.4 276.8L960.8 270.4L955.7 275.2L953.4 282.4L951.2 288.8L951.7 298.2L954.0 304.5L954.0 312.2L951.2 318.4L947.2 323.8L942.6 325.7L939.2 323.8L936.4 316.9L936.4 309.1L935.2 301.4L937.3 291.9L939.5 284.0L943.2 274.4L946.0 268.0L942.1 272.8L936.9 276.8L934.1 280.0L935.8 275.2L938.6 271.2L943.8 263.9L947.2 260.7L953.4 258.2L958.0 256.6Z" fill="#dff2fc" stroke="#9ecbe6" stroke-width=".7"/><path d="M971.4 259.8L976.2 256.9L981.9 257.4L984.2 253.3L995.6 252.5L1004.7 254.9L1013.8 257.4L1019.5 263.1L1024.1 268.0L1028.0 275.2L1024.1 280.8L1016.1 278.4L1012.1 273.6L1007.0 268.8L1010.4 277.6L1006.4 285.6L1005.3 293.5L1004.1 299.8L997.9 304.5L996.2 296.7L993.9 289.6L991.0 287.7L986.5 290.4L980.8 294.8L983.6 288.8L987.0 284.0L987.6 276.0L987.0 271.2L985.3 267.2L978.5 263.9L973.9 261.5Z" fill="#dff2fc" stroke="#9ecbe6" stroke-width=".7"/><path d="M1037.7 306.0L1034.9 310.7L1027.5 315.3L1024.1 317.6L1017.2 320.7L1010.4 324.5L1005.3 327.6L996.7 329.1L991.6 327.6L985.9 324.5L989.3 319.9L995.6 319.2L996.7 320.7L1003.6 316.1L1010.4 310.7L1018.4 309.5L1024.1 311.5L1027.5 307.6L1033.2 306.4Z" fill="#dff2fc" stroke="#9ecbe6" stroke-width=".7"/><path d="M1027.5 299.8L1032.0 294.3L1037.7 291.2L1048.0 289.3L1057.1 290.4L1065.1 285.6L1067.9 288.8L1068.5 295.1L1065.1 297.1L1056.0 300.1L1048.0 299.0L1040.0 299.0L1035.5 300.6L1030.9 301.4Z" fill="#dff2fc" stroke="#9ecbe6" stroke-width=".7"/><path d="M927.2 181.3L934.1 188.4L932.9 197.2L928.4 200.7L922.7 195.5L921.6 186.7Z" fill="#dff2fc" stroke="#9ecbe6" stroke-width=".7"/><path d="M834.4 156.8L839.0 163.3L839.5 172.3L837.3 181.3L832.1 182.2L831.6 174.1L832.1 165.1L831.6 159.6Z" fill="#dff2fc" stroke="#9ecbe6" stroke-width=".7"/><path d="M809.9 116.3L821.3 125.9L828.2 137.3L832.1 148.5L833.8 155.9L828.2 154.1L821.3 144.8L811.1 135.4L805.4 124.0Z" fill="#dff2fc" stroke="#9ecbe6" stroke-width=".7"/><path d="M808.8 159.6L813.3 165.1L817.3 174.1L820.2 183.1L816.8 184.9L812.2 177.7L808.8 168.7L805.4 161.4Z" fill="#dff2fc" stroke="#9ecbe6" stroke-width=".7"/><path d="M789.4 129.7L797.4 141.0L798.5 152.2L798.5 155.9L795.1 148.5L791.7 137.3Z" fill="#dff2fc" stroke="#9ecbe6" stroke-width=".7"/><path d="M995.6 309.9L997.3 312.2L995.6 315.0L992.2 313.8Z" fill="#dff2fc" stroke="#9ecbe6" stroke-width=".7"/><path d="M1173.6 275.7L1171.0 270.4L1168.1 263.1L1164.2 261.5L1164.3 238.8L1158.5 234.2L1151.6 236.7L1148.0 232.5L1139.1 245.0L1136.0 253.3L1136.3 258.2L1130.0 266.4L1126.6 268.0L1123.2 268.0L1122.0 272.7L1085.6 272.8L1075.3 279.2L1067.3 285.6L1061.6 294.6L1040.0 294.6L1035.8 299.8L1037.5 306.0L1027.5 312.2L1014.9 316.9L997.9 324.8L990.2 322.2L989.9 315.3L995.6 311.5L997.6 304.5L1001.1 295.1L996.7 267.5L984.2 259.8L980.2 254.9L975.1 248.3L970.0 242.5L959.1 235.0L943.2 228.3L929.9 218.0L917.0 223.2L902.2 221.5L894.2 218.9L893.1 222.3L885.1 217.2L881.1 213.7L872.6 212.9L858.9 211.2L857.8 208.6L856.1 199.3L852.6 199.3L852.6 206.0L534.9 206.0" fill="none" stroke="#cdb3c6" stroke-width="1" clip-path="url(#lakeclip)"/><g fill="none" stroke="#cfc6cf" stroke-width=".8" stroke-dasharray="2 1"><path d="M637.1 206.0L631.1 195.5L627.7 181.3L615.2 166.9L596.9 148.5L578.7 129.7L569.6 118.2L569.6 94.7"/><path d="M683.5 206.0L683.5 94.7"/><path d="M781.9 206.0L775.8 94.7"/><path d="M852.6 206.0L852.6 137.3L882.8 94.7"/><path d="M1089.0 263.1L1053.7 251.6L1036.6 253.3L1030.9 235.0L1030.7 161.4"/></g>
<g font-family="Liberation Sans" font-size="12" stroke="#fff" stroke-width="2.2" paint-order="stroke" stroke-linejoin="round"><circle cx="638" cy="170" r="2.3" fill="#fff" stroke="#555" stroke-width="0.9"/><text x="641.4" y="165.6" fill="#222"  textLength="38.6" lengthAdjust="spacingAndGlyphs">Calgary</text><circle cx="534.5" cy="202" r="2.3" fill="#fff" stroke="#555" stroke-width="0.9"/><text x="537.7" y="197.2" fill="#222"  textLength="54" lengthAdjust="spacingAndGlyphs">Vancouver</text><circle cx="543.8" cy="229.8" r="2.3" fill="#f7eaa8" stroke="#a08a50" stroke-width="0.9"/><text x="547.6" y="225.3" fill="#8a7a3a" stroke="none" textLength="34.7" lengthAdjust="spacingAndGlyphs">Seattle</text><circle cx="543" cy="383.2" r="2.3" fill="#fff" stroke="#555" stroke-width="0.9"/><text x="546.5" y="377.8" fill="#222"  textLength="68.7" lengthAdjust="spacingAndGlyphs">San Francisco</text><circle cx="589.8" cy="435.3" r="2.3" fill="#fff" stroke="#555" stroke-width="0.9"/><text x="594.6" y="430.5" fill="#222"  textLength="59.6" lengthAdjust="spacingAndGlyphs">Los Angeles</text><circle cx="794.4" cy="545.5" r="2.3" fill="#fff" stroke="#555" stroke-width="0.9"/><text x="798.5" y="540.4" fill="#222"  textLength="52.2" lengthAdjust="spacingAndGlyphs">Monterrey</text><circle cx="850" cy="492.5" r="2.3" fill="#f7eaa8" stroke="#a08a50" stroke-width="0.9"/><text x="854.6" y="487.4" fill="#8a7a3a" stroke="none" textLength="42.3" lengthAdjust="spacingAndGlyphs">Houston</text><circle cx="833.9" cy="452.4" r="2.3" fill="#f7eaa8" stroke="#a08a50" stroke-width="0.9"/><text x="838.7" y="447.2" fill="#8a7a3a" stroke="none" textLength="30" lengthAdjust="spacingAndGlyphs">Dallas</text><circle cx="909.7" cy="370.7" r="2.3" fill="#f7eaa8" stroke="#a08a50" stroke-width="0.9"/><text x="913.2" y="365" fill="#8a7a3a" stroke="none" textLength="41.9" lengthAdjust="spacingAndGlyphs">St. Louis</text><circle cx="938.4" cy="322" r="2.3" fill="#fff" stroke="#555" stroke-width="0.9"/><text x="942.4" y="317" fill="#222"  textLength="40.7" lengthAdjust="spacingAndGlyphs">Chicago</text><circle cx="991.1" cy="314.8" r="2.3" fill="#fff" stroke="#555" stroke-width="0.9"/><text x="995.1" y="310.3" fill="#222"  textLength="34.8" lengthAdjust="spacingAndGlyphs">Detroit</text><circle cx="1032.5" cy="294.2" r="2.3" fill="#fff" stroke="#555" stroke-width="0.9"/><text x="1036.6" y="289.4" fill="#222"  textLength="39.3" lengthAdjust="spacingAndGlyphs">Toronto</text><circle cx="1074" cy="265.9" r="2.3" fill="#fff" stroke="#555" stroke-width="0.9"/><text x="1078.5" y="261.4" fill="#222"  textLength="35.6" lengthAdjust="spacingAndGlyphs">Ottawa</text><circle cx="1126.9" cy="314.3" r="2.3" fill="#fff" stroke="#555" stroke-width="0.9"/><text x="1131.5" y="310" fill="#222"  textLength="34.7" lengthAdjust="spacingAndGlyphs">Boston</text><circle cx="1091.6" cy="338.8" r="2.3" fill="#fff" stroke="#555" stroke-width="0.9"/><text x="1099.3" y="334.6" fill="#222"  textLength="46.2" lengthAdjust="spacingAndGlyphs">New York</text><circle cx="1060" cy="365.9" r="2.3" fill="#fff" stroke="#555" stroke-width="0.9"/><text x="1065" y="361.6" fill="#222"  textLength="59" lengthAdjust="spacingAndGlyphs">Washington</text><circle cx="975.3" cy="439" r="2.3" fill="#f7eaa8" stroke="#a08a50" stroke-width="0.9"/><text x="979.2" y="434.3" fill="#8a7a3a" stroke="none" textLength="35.4" lengthAdjust="spacingAndGlyphs">Atlanta</text><circle cx="1023" cy="543.6" r="2.3" fill="#fff" stroke="#555" stroke-width="0.9"/><text x="1027.4" y="539" fill="#222"  textLength="30.8" lengthAdjust="spacingAndGlyphs">Miami</text><circle cx="998" cy="577" r="2.3" fill="#fff" stroke="#555" stroke-width="0.9"/><text x="1002.6" y="572" fill="#222"  textLength="37.2" lengthAdjust="spacingAndGlyphs">Havana</text></g><path id="rocky" d="M571 136 C590 165 604 186 613 204 C619 216 622 226 624 236" fill="none"/><text font-family="Liberation Sans" font-size="11.5" fill="#666" letter-spacing="0.6" stroke="#fff" stroke-width="1.6" paint-order="stroke"><textPath href="#rocky">Rocky Mountains</textPath></text><g font-family="Liberation Sans" font-style="italic" font-size="10" fill="#5a9ab5"><text x="943.8" y="228" textLength="20.6" lengthAdjust="spacingAndGlyphs">Lake</text><text x="935" y="238.6" textLength="38.7" lengthAdjust="spacingAndGlyphs">Superior</text><text x="888.4" y="552.4" textLength="35" lengthAdjust="spacing">Gulf of</text><text x="888.4" y="565.2" textLength="34.5" lengthAdjust="spacing">Mexico</text></g><text x="780.5" y="307.7" font-family="Liberation Sans" font-style="italic" font-size="10.5" fill="#9a9a5a" textLength="65" lengthAdjust="spacing">Great Plains</text><g font-family="Liberation Serif" font-size="13.5"><text x="771" y="344" fill="#7d7430" textLength="69.4" lengthAdjust="spacing">UNITED</text><text x="771" y="365" fill="#3c3040" textLength="69.4" lengthAdjust="spacing">STATES</text></g><text x="748" y="571.7" font-family="Liberation Serif" font-weight="700" font-size="9.5" fill="#4a4048" textLength="45.7" lengthAdjust="spacing">MÉXICO</text><circle cx="708.5" cy="284.8" r="5.3" fill="#6e0000" stroke="#4a0000" stroke-width=".6"/></svg>
<div class="mbtn" style="left:434px;top:149px;height:65px"></div><div class="abs" style="left:434px;top:181px;width:32px;height:1px;background:#a6a6a6;"></div>
<svg class="abs" style="left:434px;top:149px" width="32" height="65" viewBox="0 0 32 65"><path d="M11 16.5H21M16 11.5V21.5M11 49.5H21" stroke="#222" stroke-width="1.2" fill="none"/></svg><div class="mbtn" style="left:434px;top:223px"></div><svg class="abs" style="left:434px;top:223px" width="32" height="32" viewBox="0 0 32 32"><path d="M9.5 16.5L16 9.5L22.5 16.5M11 15V23H14.2V18.5H17.8V23H21V15M11.6 13.6V10.5H13.6V11.6" stroke="#111" stroke-width="1.15" fill="none" stroke-linejoin="round"/></svg><div class="mbtn" style="left:1179px;top:149px"></div><div class="mbtn" style="left:1179px;top:191px"></div><div class="mbtn" style="left:1179px;top:233px"></div><svg class="abs" style="left:1179px;top:149px" width="32" height="32" viewBox="0 0 32 32"><circle cx="14.8" cy="14.8" r="6.3" fill="none" stroke="#111" stroke-width="1.3"/><path d="M19.4 19.4L24 24" stroke="#111" stroke-width="1.5"/></svg><svg class="abs" style="left:1179px;top:191px" width="32" height="32" viewBox="0 0 32 32"><path d="M16 8.5L24 12.5L16 16.5L8 12.5Z M8 16L16 20L24 16 M8 19.5L16 23.5L24 19.5" stroke="#111" stroke-width="1.15" fill="none" stroke-linejoin="round"/></svg><svg class="abs" style="left:1179px;top:233px" width="32" height="32" viewBox="0 0 32 32"><g stroke="#111" stroke-width="1.1" fill="none"><rect x="8.5" y="8.5" width="6" height="6"/><rect x="17.5" y="8.5" width="6" height="6"/><rect x="8.5" y="17.5" width="6" height="6"/><rect x="17.5" y="17.5" width="6" height="6"/><path d="M9 9L14 14M18 14L23 9M9 23L14 18M18 18L23 23"/></g></svg><div class="abs" style="left:704px;top:134px;width:237.5px;height:27.5px;background:#fff;"></div>
<div class="abs" style="left:730px;top:134px;width:1px;height:27.5px;background:#d4d4d4;"></div>
<div class="abs" style="left:889px;top:134px;width:1px;height:27.5px;background:#d4d4d4;"></div>
<div class="abs" style="left:915px;top:137px;width:1px;height:22px;background:#d4d4d4;"></div>
<svg class="abs" style="left:708px;top:138px" width="18" height="18" viewBox="0 0 18 18"><path d="M9 1.5V6M9 12V16.5M1 9H6M12 9H17" stroke="#222" stroke-width="1.2"/><circle cx="9" cy="9" r="1.3" fill="#222"/></svg><div class="t" style="left:734.3px;top:140.10px;font-size:13px;color:#222;letter-spacing:0.15px;">52.365 -125.802 Degrees</div>
<svg class="abs" style="left:895px;top:139px" width="15" height="16" viewBox="0 0 15 16"><rect x="1.5" y="1.5" width="9" height="11.5" rx="1.2" fill="none" stroke="#b5b5b5" stroke-width="1.1"/><path d="M12.5 3.5V14.5H4" fill="none" stroke="#b5b5b5" stroke-width="1.1"/></svg><svg class="abs" style="left:921px;top:142px" width="15" height="10" viewBox="0 0 15 10"><path d="M1.5 1.5L7.5 8L13.5 1.5" stroke="#222" stroke-width="1.3" fill="none"/></svg><div class="abs" style="left:425.5px;top:574px;width:110.5px;height:17px;background:rgba(255,255,255,.55);"></div>
<div class="abs" style="left:425.5px;top:591px;width:89px;height:17px;background:rgba(255,255,255,.55);"></div>
<div class="abs" style="left:425.5px;top:574px;width:2px;height:34px;background:#000;"></div>
<div class="abs" style="left:534px;top:574px;width:2px;height:17.5px;background:#000;"></div>
<div class="abs" style="left:425.5px;top:589.7px;width:110.5px;height:2px;background:#000;"></div>
<div class="abs" style="left:513px;top:591px;width:2px;height:17px;background:#000;"></div>
<div class="t" style="left:432.3px;top:577.77px;font-size:11.5px;color:#111;letter-spacing:0.35px;font-weight:700;">1,000 km</div>
<div class="t" style="left:432.3px;top:593.97px;font-size:11.5px;color:#111;letter-spacing:0.35px;font-weight:700;">500 mi</div>
<div class="abs" style="left:742px;top:584px;width:484px;height:16.3px;background:rgba(255,255,255,.62);"></div>
<div class="t" style="left:747.2px;top:584.54px;font-size:12px;color:#6e6e6e;letter-spacing:-0.29px;">Esri, USGS | Esri, TomTom, Garmin, FAO, NOAA, USGS, EPA, USFWS…</div>
<div class="t" style="left:1134.4px;top:584.54px;font-size:12px;color:#6e6e6e;letter-spacing:-0.06px;">Powered by Esri</div>
<div class="panel" style="left:1238px;top:132px;width:401px;height:480px"></div>
<div class="abs" style="left:1240px;top:173px;width:387px;height:1px;background:#9a9a9a;"></div>
<svg class="abs" style="left:1569px;top:146px" width="17" height="17" viewBox="0 0 17 17"><path d="M1 9.5V2.2C1 1.5 1.5 1 2.2 1H10.8C11.5 1 12 1.5 12 2.2V5" stroke="#a2a2a2" stroke-width="1.1" fill="none" stroke-dasharray="2 1.6"/><path d="M8.2 8.2L15.3 15.3M15.3 8.2L8.2 15.3" stroke="#a8a8a8" stroke-width="1"/></svg>
<svg class="abs" style="left:1595px;top:144.5px" width="18" height="18" viewBox="0 0 18 18"><g fill="none" stroke="#111" stroke-width="1.12"><circle cx="4.3" cy="4.2" r="3"/><circle cx="13.3" cy="4.2" r="3"/><circle cx="4.3" cy="13.2" r="3"/><circle cx="13.3" cy="13.2" r="3"/></g></svg>
<svg class="abs" style="left:1627px;top:134px" width="10" height="476" viewBox="0 0 10 476"><path d="M1.7 7.2L5 2.8L8.3 7.2Z" fill="#a3a3a3"/><rect x="2" y="12" width="5.8" height="75" rx="2.9" fill="#a0a0a0"/><path d="M1.7 468.5L8.3 468.5L5 473Z" fill="#a3a3a3"/></svg>
<div class="t" style="left:1279px;top:198.98px;font-size:24px;color:#111;letter-spacing:0.17px;">Report Detail</div>
<style>.rp b{letter-spacing:-.19px;color:#111}</style><div class="rp"><div class="t" style="left:1279px;top:247.45px;font-size:14px;color:#2a2a2a;"><b>State/Territory:</b> Wyoming</div>
<div class="t" style="left:1279px;top:265.62px;font-size:14px;color:#2a2a2a;"><b>County/Equivalent:</b> Big Horn</div>
<div class="t" style="left:1279px;top:301.96px;font-size:14px;color:#2a2a2a;"><b>Date:</b> 2/12/26</div>
<div class="t" style="left:1279px;top:338.30px;font-size:14px;color:#2a2a2a;"><b>How dry or wet is it?</b> Severely Dry</div>
<div class="t" style="left:1279px;top:374.64px;font-size:14px;color:#2a2a2a;"><b>How much experience do you have with</b></div>
<div class="t" style="left:1279px;top:392.81px;font-size:14px;color:#2a2a2a;"><b>conditions there?</b></div>
<div class="t" style="left:1279px;top:410.98px;font-size:14px;color:#2a2a2a;">20 or more years</div>
<div class="t" style="left:1279px;top:447.32px;font-size:14px;color:#2a2a2a;"><b>How many times in the past have you seen it</b></div>
<div class="t" style="left:1279px;top:465.49px;font-size:14px;color:#2a2a2a;"><b>like this?</b></div>
<div class="t" style="left:1279px;top:483.66px;font-size:14px;color:#2a2a2a;">Once</div>
<div class="t" style="left:1279px;top:520.00px;font-size:14px;color:#2a2a2a;"><b>When was it like this in the past?</b></div>
<div class="t" style="left:1279px;top:538.17px;font-size:14px;color:#2a2a2a;">2012</div>
<div class="t" style="left:1279px;top:574.51px;font-size:14px;color:#2a2a2a;"><b>How localized or widespread are the conditions</b></div>
<div class="t" style="left:1279px;top:592.68px;font-size:14px;color:#2a2a2a;"><b>you are reporting?</b></div>
</div><div class="panel" style="left:417px;top:622px;width:811px;height:300px"></div>
<div class="t" style="left:413.5px;top:638.46px;font-size:16px;color:#2a2a2a;letter-spacing:0.03px;width:811px;text-align:center;">Reports by Date</div>
<div class="abs" style="left:550.4px;top:687px;width:588px;height:194.3px;background:#2f4a24;"></div>
<div class="abs" style="left:476px;top:686px;width:1px;height:201px;background:#000;"></div>
<div class="abs" style="left:471px;top:686px;width:5px;height:1px;background:#000;"></div>
<div class="abs" style="left:471px;top:881px;width:741px;height:1px;background:#000;"></div>
<div class="abs" style="left:1211px;top:881px;width:1px;height:6px;background:#000;"></div>
<div class="t" style="left:461.3px;top:677.57px;font-size:11.5px;color:#8a8a8a;">1</div>
<div class="t" style="left:460.8px;top:873.27px;font-size:11.5px;color:#8a8a8a;">0</div>
<div class="t" style="left:461.6px;top:891.54px;font-size:12px;color:#6e6e6e;letter-spacing:0.1px;">Feb 9</div>
<div class="abs" style="left:1190px;top:888px;width:36px;height:20px;overflow:hidden"><div class="t" style="left:3.6px;top:3.54px;font-size:12px;color:#6e6e6e;letter-spacing:0.1px;">Feb 16</div>
</div><div class="t" style="left:440px;top:784px;font-size:14px;color:#4a4a4a;letter-spacing:.4px;transform:translate(-50%,-50%) rotate(-90deg)">Number of reports</div>
<div class="panel" style="left:1238px;top:622px;width:401px;height:300px"></div>
<div class="t" style="left:1237.5px;top:637.96px;font-size:16px;color:#2a2a2a;letter-spacing:0.1px;width:401px;text-align:center;">Reports by How Dry or Wet</div>
<div class="abs" style="left:1284.5px;top:709.7px;width:180px;height:180px;border-radius:50%;background:#730000"></div>
<div class="abs" style="left:1522px;top:785.7px;width:13.5px;height:13.5px;border-radius:2.5px;background:#730000"></div>
<div class="t" style="left:1541px;top:787.24px;font-size:12px;color:#4a4a4a;letter-spacing:-0.07px;">Severely Dry</div>
</body></html>
